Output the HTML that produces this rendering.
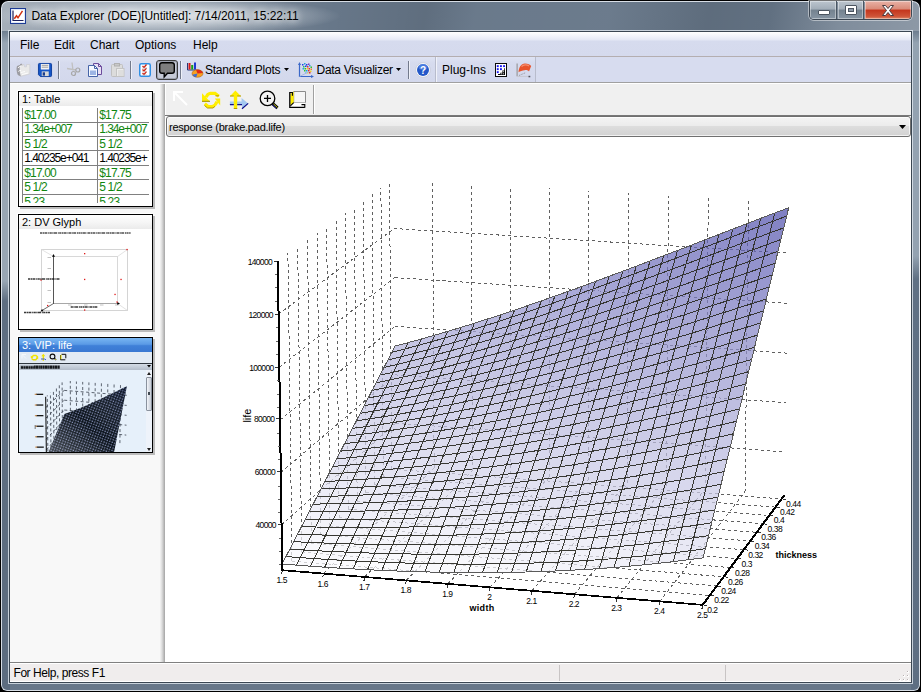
<!DOCTYPE html><html><head><meta charset="utf-8"><title>Data Explorer</title><style>
*{box-sizing:border-box;margin:0;padding:0}
html,body{width:921px;height:692px;overflow:hidden;background:#000}
body{position:relative;font-family:"Liberation Sans",sans-serif;font-size:12px;color:#000}
.abs{position:absolute}
#frame{position:absolute;left:0;top:0;width:921px;height:692px;border-radius:8px 8px 7px 7px;background:#000;overflow:hidden}
#glass{position:absolute;left:1px;top:1px;width:919px;height:690px;border-radius:7px 7px 6px 6px;
 background:
  radial-gradient(ellipse 175px 19px at 165px 15px, rgba(240,244,248,.85), rgba(238,242,246,.45) 55%, rgba(235,240,245,0) 100%),
  linear-gradient(100deg, rgba(255,255,255,.42) 0px, rgba(255,255,255,.34) 60px, rgba(255,255,255,.0) 330px, rgba(0,0,0,.08) 420px, rgba(255,255,255,.02) 470px, rgba(255,255,255,.03) 600px, rgba(0,0,0,.09) 700px,rgba(0,0,0,.06) 760px, rgba(255,255,255,.16) 830px, rgba(255,255,255,.26) 919px) 0 0/919px 30px no-repeat,
  linear-gradient(180deg,rgba(152,166,180,0) 0,#98a6b4 14px,#98a6b4 252px,#5e6e81 272px,#5c6c7f 100%) 0 28px/9px 100% no-repeat,
  linear-gradient(180deg,rgba(147,162,177,0) 0,#93a2b1 14px,#93a2b1 227px,#5f7084 250px,#5d6e82 100%) 100% 28px/9px 100% no-repeat,
  #677789;
 box-shadow:inset 0 0 0 1px rgba(235,240,246,.85)}
#client{position:absolute;left:10px;top:32px;width:901px;height:650px;background:#f8f8f8;box-shadow:0 0 0 1px #3a4652,0 0 0 2px rgba(225,232,240,.8)}
#title{position:absolute;left:31.400px;top:8px;height:16px;line-height:16px;font-size:12px;white-space:pre;letter-spacing:-0.05px;color:#000;text-shadow:0 0 6px rgba(255,255,255,.9),0 0 10px rgba(255,255,255,.8)}
#menubar{position:absolute;left:0;top:0;width:901px;height:24px;background:linear-gradient(180deg,#ffffff 0,#f2f4fb 4px,#e4e8f5 8px,#d6dbee 9px,#d5daed 100%)}
#menubar span{position:absolute;top:6px;line-height:14px;white-space:pre}
#mline{position:absolute;left:0;top:24px;width:901px;height:1px;background:#b4aeb0}
#toolbar{position:absolute;left:0;top:25px;width:901px;height:25px;background:linear-gradient(180deg,#dfe3f3 0,#d6dbee 6px,#d3d8ec 100%)}
#tline{position:absolute;left:0;top:50px;width:901px;height:1px;background:#a0a0a0}
#tline2{position:absolute;left:0;top:51px;width:901px;height:1px;background:#fff}
.sep{position:absolute;top:4px;width:2px;height:18px;border-left:1px solid #737a8c;border-right:1px solid #eef0f8}
.tt{position:absolute;top:6px;line-height:14px;white-space:pre}
#left{position:absolute;left:0;top:52px;width:150px;height:578px;background:#f8f8f8}
#split{position:absolute;left:150px;top:52px;width:5px;height:578px;background:linear-gradient(90deg,#f4f4f4,#dcdcdc 40%,#a4a4a4)}
#right{position:absolute;left:155px;top:52px;width:746px;height:578px;background:#fff}
#rtool{position:absolute;left:0;top:0;width:746px;height:31px;background:#f0f0f0;box-shadow:inset 1px 0 0 #fff}
#rline{position:absolute;left:0;top:31px;width:746px;height:1px;background:#787878}
#combo{position:absolute;left:1px;top:32px;width:745px;height:21px;border:1px solid #707070;border-radius:3px;background:linear-gradient(180deg,#f4f4f4 0,#ececec 45%,#dddddd 50%,#d2d2d2 100%);box-shadow:inset 0 0 0 1px rgba(255,255,255,.7)}
#combo span{position:absolute;left:2px;top:3.500px;font-size:11px;line-height:13px;letter-spacing:-0.23px;white-space:pre}
#status{position:absolute;left:0;top:630px;width:901px;height:20px;background:#f0eded;border-top:1px solid #808080;box-shadow:inset 0 1px 0 #fff, inset 0 -1px 0 #fff}
#status span{position:absolute;left:3.500px;top:3px;line-height:14px;white-space:pre;letter-spacing:-0.44px}
.sdiv{position:absolute;top:2px;width:1px;height:16px;background:#c8c4c4}
.thumb{position:absolute;left:8px;width:135px;height:116px;border:1px solid #000;background:#fff;box-shadow:2px 2px 0 #bcbcbc, -1px -1px 0 #fff;overflow:hidden}
.thead{position:absolute;left:0;top:0;width:133px;height:14px;background:linear-gradient(180deg,#ffffff,#f6f6f6 50%,#ebebeb);font-size:11px;line-height:14.500px;padding-left:3px;white-space:pre}
.cell{position:absolute;font-size:12px;line-height:14px;letter-spacing:-0.85px;white-space:pre;color:#0f860f}
.hl{position:absolute;left:3px;width:127px;height:1px;background:#808080}
.vl{position:absolute;width:1px;background:#808080}
svg{position:absolute;overflow:visible}
svg text{font-family:"Liberation Sans",sans-serif}
.g{stroke:#606060;stroke-width:1;stroke-dasharray:3 3;fill:none}
.grid,.mesh,.surf{shape-rendering:crispEdges}
.surf path{stroke:none;fill-opacity:.72}
.mesh{stroke:#2e2e28;stroke-width:1;fill:none;stroke-opacity:.95}
.edge{stroke:#5a5a5a;stroke-width:1;fill:none;shape-rendering:crispEdges}
.ax{stroke:#000;fill:none;stroke-linejoin:miter;shape-rendering:crispEdges}
.tk{stroke:#333;stroke-width:1;shape-rendering:crispEdges}
.tk2{stroke:#666;stroke-width:1;shape-rendering:crispEdges}
.zl{font-size:8.500px;text-anchor:end;letter-spacing:-0.68px;fill:#000}
.xl{font-size:8.500px;text-anchor:middle;letter-spacing:-0.45px;fill:#000}
.yl{font-size:8.500px;text-anchor:start;letter-spacing:-0.5px;fill:#000}
.al{font-size:9px;font-weight:700;fill:#000}
</style></head><body>
<div id="frame"><div id="glass"></div>
<svg style="left:10px;top:8px" width="16" height="16" viewBox="0 0 16 16"><rect x=".5" y=".5" width="15" height="15" fill="#fff" stroke="#1c3a94"/><rect x="1.5" y="1.500" width="13" height="13" fill="none" stroke="#dfe8f8"/><path d="M3 2.500v10h10.500" fill="none" stroke="#1a1e5a" stroke-width="1.200"/><path d="M4.300 10.800l2.200-3 1.500 2 4.500-7" fill="none" stroke="#d03010" stroke-width="1.500"/></svg>
<div id="title">Data Explorer (DOE)[Untitled]: 7/14/2011, 15:22:11</div>

<div class="abs" style="left:809px;top:1px;width:103px;height:19px;border:1px solid #3d4753;border-top:none;border-radius:0 0 5px 5px;overflow:hidden;box-shadow:0 0 0 1px rgba(255,255,255,.45)">
 <div class="abs" style="left:0;top:0;width:27px;height:18px;background:linear-gradient(180deg,#bcc5ce 0,#a2adb8 45%,#74828f 50%,#8795a3 100%);border-right:1px solid #4a5662;box-shadow:inset 0 0 0 1px rgba(255,255,255,.4)"></div>
 <div class="abs" style="left:28px;top:0;width:26px;height:18px;background:linear-gradient(180deg,#bcc5ce 0,#a2adb8 45%,#74828f 50%,#8795a3 100%);border-right:1px solid #4a5662;box-shadow:inset 0 0 0 1px rgba(255,255,255,.4)"></div>
 <div class="abs" style="left:55px;top:0;width:46px;height:18px;background:linear-gradient(180deg,#e8b2a6 0,#d98a78 45%,#c4351c 50%,#cf5438 85%,#de8a6a 100%);box-shadow:inset 0 0 0 1px rgba(255,255,255,.4)"></div>
 <div class="abs" style="left:8px;top:9px;width:12px;height:5px;background:#fff;border:1px solid #4c5560;border-radius:1px"></div>
 <div class="abs" style="left:35px;top:4px;width:12px;height:10px;background:#fff;border:1px solid #4c5560;border-radius:1px"></div>
 <div class="abs" style="left:38px;top:7px;width:6px;height:4px;background:#8e9aa8;border:1px solid #4c5560"></div>
 <svg style="left:70px;top:3px" width="16" height="13" viewBox="0 0 16 13"><path d="M2.5 1.5h3l2.5 3 2.500-3h3l-4 5 4 5h-3l-2.500-3-2.500 3h-3l4-5z" fill="#fff" stroke="#4a3a3e" stroke-width="1"/></svg>
</div>
<div id="client">
<div id="menubar"><span style="left:10px">File</span><span style="left:44px">Edit</span><span style="left:80px">Chart</span><span style="left:125px">Options</span><span style="left:183px">Help</span></div><div id="mline"></div>
<div id="toolbar">
<div class="sep" style="left:48px"></div><div class="sep" style="left:120px"></div><div class="sep" style="left:170px"></div><div class="sep" style="left:398px"></div>
<div class="abs" style="left:425px;top:0;width:1px;height:25px;background:#b8bccc"></div><div class="abs" style="left:426px;top:0;width:1px;height:25px;background:#f0f2fa"></div>
<div class="abs" style="left:525px;top:0;width:1px;height:25px;background:#b8bccc"></div><div class="abs" style="left:526px;top:0;width:375px;height:25px;background:#d7dcef"></div>
<svg style="left:6px;top:6px" width="15" height="14" viewBox="0 0 15 14"><path d="M2.500 4.500L5 1.500H8L8.500 3.800H10.500V1.500H13.800V11L5 13.300L2.500 11.500Z" fill="#e9e9e9" stroke="#cfcfd4" stroke-width=".8"/><path d="M1 3Q-.3 7 1.800 12L4.800 13.500L3.800 9Q3 5.500 4.500 1.800Z" fill="#9c9ca2"/><path d="M2 5Q3 3.200 4.500 3.500M2.300 8.500Q3.500 7 5 7.500M5 9.500L9 8.500M6 11.500L12 10" fill="none" stroke="#fff" stroke-width=".9"/><path d="M4 2L5.200 0.800L6 2.500" fill="none" stroke="#9c9ca0" stroke-width=".9"/></svg><svg style="left:28px;top:6px" width="14" height="14" viewBox="0 0 15 15"><path d="M.5 1.500q0-1 1-1h12q1 0 1 1v12q0 1-1 1h-11l-2-2z" fill="#1656c8" stroke="#0c3c9c"/><rect x="3" y="1" width="9" height="6" fill="#f4f4f4"/><path d="M4 2.500h7M4 4.500h7" stroke="#9a9a9a"/><rect x="4" y="9" width="7.500" height="5" fill="#d8d8d8"/><rect x="5" y="10" width="2.500" height="3.500" fill="#1a3c8c"/></svg><svg style="left:56px;top:5px" width="15" height="15" viewBox="0 0 15 15"><path d="M6 .5l1 8M1 6.500l9 1.500" stroke="#c0c0c0" stroke-width="1.300" fill="none"/><circle cx="7.500" cy="11.500" r="2" fill="none" stroke="#a8a8a8" stroke-width="1.200"/><circle cx="11.800" cy="8" r="2" fill="none" stroke="#a8a8a8" stroke-width="1.200"/></svg><svg style="left:78px;top:6px" width="15" height="14" viewBox="0 0 15 14"><path d="M5.500.5h5l3 3v8h-8z" fill="#e8e0f4" stroke="#6c4c9c"/><path d="M10.500.5v3h3" fill="none" stroke="#6c4c9c"/><path d="M.5 2.500h6l3 3v8h-9z" fill="#f4f8ff" stroke="#4664a8"/><path d="M6.500 2.500v3h3" fill="none" stroke="#4664a8"/><rect x="2" y="7.500" width="6" height="4.500" fill="#9cb4e4"/></svg><svg style="left:101px;top:6px" width="14" height="14" viewBox="0 0 14 14"><rect x=".5" y="1.500" width="11" height="12" rx="1" fill="#dcdcdc" stroke="#c0c0c0"/><rect x="3.500" y=".5" width="5" height="2.500" fill="#c8c8c8" stroke="#b0b0b0"/><rect x="5.500" y="5.500" width="7.500" height="8" fill="#ececec" stroke="#c4c4c4"/><path d="M7 8h5M7 10h5M7 12h5" stroke="#d0d0d0"/></svg><svg style="left:129px;top:6px" width="12" height="14" viewBox="0 0 12 14"><rect x=".75" y=".75" width="10.500" height="12.500" rx="1.500" fill="#fff" stroke="#2f8fe4" stroke-width="1.500"/><path d="M3.500 3l1.500 1.500 2.500-3M3.500 6.500l1.500 1.500 2.500-3M3.500 10l1.500 1.500 2.500-3" fill="none" stroke="#d02818" stroke-width="1.300"/><path d="M3 5.200h5M3 8.700h5M3 12h5" stroke="#b8b8c8" stroke-width=".6"/></svg><div class="abs" style="left:146px;top:3px;width:22px;height:20px;border:1px solid #3c3c3c;border-radius:3px;background:#c6cad6;box-shadow:inset 0 0 0 1px #9ea2ae"></div><svg style="left:149px;top:5px" width="16" height="16" viewBox="0 0 16 16"><path d="M3 .7h10q2.300 0 2.300 2.300v6q0 2.300-2.300 2.300h-4.500l-3.300 3.700v-3.700h-2.200q-2.300 0-2.300-2.300v-6q0-2.300 2.300-2.300z" fill="#7e7e7e" stroke="#000" stroke-width="1.400"/></svg><svg style="left:177px;top:5px" width="17" height="16" viewBox="0 0 17 16"><path d="M.5 1v7h9" fill="none" stroke="#283878"/><rect x="1.500" y="1" width="2" height="6.500" fill="#d81818"/><rect x="4.200" y="3" width="2" height="4.500" fill="#18a018"/><rect x="7" y=".5" width="2" height="7" fill="#2038d0"/><ellipse cx="10.500" cy="11.500" rx="5.500" ry="3.800" fill="#f8a020"/><path d="M10.500 11.500l5.500-.5a5.500 3.800 0 0 0-7-3.300z" fill="#e02818"/><path d="M10.500 11.500l-5.300 1.200a5.500 3.800 0 0 0 4 2.600z" fill="#3870d8"/><ellipse cx="10.500" cy="11.500" rx="5.500" ry="3.800" fill="none" stroke="#a05810" stroke-width=".5"/></svg><svg style="left:274px;top:11px" width="5" height="3" viewBox="0 0 5 3"><path d="M0 0h5l-2.500 3z" fill="#000"/></svg><svg style="left:385.500px;top:11px" width="5" height="3" viewBox="0 0 5 3"><path d="M0 0h5l-2.500 3z" fill="#000"/></svg><svg style="left:288px;top:5px" width="16" height="16" viewBox="0 0 16 16"><rect x="4" y="2" width="1.500" height="1.500" fill="#2040e0"/><rect x="6" y="1" width="1.500" height="1.500" fill="#20a0e0"/><rect x="8" y="2" width="1.500" height="1.500" fill="#2040e0"/><rect x="10" y="1.5" width="1.500" height="1.500" fill="#8030c0"/><rect x="5" y="4" width="1.500" height="1.500" fill="#20c060"/><rect x="7" y="3.5" width="1.500" height="1.500" fill="#2040e0"/><rect x="9" y="4" width="1.500" height="1.500" fill="#e03030"/><rect x="11" y="3" width="1.500" height="1.500" fill="#20a0e0"/><rect x="12.5" y="4.5" width="1.500" height="1.500" fill="#30c030"/><rect x="4.5" y="6" width="1.500" height="1.500" fill="#20a0e0"/><rect x="6.5" y="6" width="1.500" height="1.500" fill="#30c030"/><rect x="8.5" y="6" width="1.500" height="1.500" fill="#f0d020"/><rect x="10.5" y="6" width="1.500" height="1.500" fill="#e03030"/><rect x="12.5" y="6.5" width="1.500" height="1.500" fill="#f08020"/><rect x="6" y="8" width="1.500" height="1.500" fill="#30c030"/><rect x="8" y="8" width="1.500" height="1.500" fill="#20a0e0"/><rect x="10" y="8" width="1.500" height="1.500" fill="#e03030"/><rect x="12" y="8.5" width="1.500" height="1.500" fill="#f0d020"/><rect x="9" y="10" width="1.500" height="1.500" fill="#f0d020"/><rect x="11" y="10" width="1.500" height="1.500" fill="#e03030"/><rect x="7" y="10" width="1.500" height="1.500" fill="#80c0f0"/><path d="M1.500 2v12.500h13" fill="none" stroke="#3a68c8" stroke-width="1.200"/><path d="M1.500 0l-1.500 3h3zM16 14.500l-3-1.500v3z" fill="#3a68c8"/><path d="M1.500 14.500l10-5" stroke="#9ab0e0" stroke-width=".8"/></svg><svg style="left:405px;top:5px" width="16" height="16" viewBox="0 0 16 16"><circle cx="8" cy="8" r="7.300" fill="#fff" stroke="#c4c8d4" stroke-width=".8"/><circle cx="8" cy="8" r="6" fill="#2458c8"/><ellipse cx="8" cy="5" rx="4.500" ry="3" fill="#5a8ae8" opacity=".7"/><text x="8" y="11.500" font-size="10" font-weight="700" fill="#fff" text-anchor="middle">?</text></svg><svg style="left:485px;top:6px" width="12" height="14" viewBox="0 0 12 14"><rect x=".5" y=".5" width="11" height="13" fill="#fff" stroke="#0a0a0a" stroke-width="1"/><rect x="1.8" y="2.2" width="1.900" height="1.900" fill="#1818f0"/><rect x="5" y="2.2" width="1.900" height="1.900" fill="#1818f0"/><rect x="8.1" y="2.2" width="1.900" height="1.900" fill="#1818f0"/><rect x="1.8" y="5.2" width="1.900" height="1.900" fill="#1818f0"/><rect x="5" y="5.2" width="1.900" height="1.900" fill="#1818f0"/><rect x="1.8" y="8.2" width="1.900" height="1.900" fill="#1818f0"/><path d="M8.100 2.200h1.900l-1.900 1.600zM5 5.200h1.900l-1.900 1.600z" fill="#fff" opacity=".0"/><path d="M3 12h7V5.300H9.200V7.600H7.300V9.700H5.200V11H3z" fill="#0a0a0a"/><rect x="7.800" y="8.200" width="1" height="1" fill="#fff"/><rect x="5.800" y="10.300" width="1" height="1" fill="#fff"/><rect x="7.800" y="10.300" width="1" height="1" fill="#fff"/></svg><svg style="left:506px;top:5px" width="17" height="16" viewBox="0 0 17 16"><path d="M1.100 1.500V14.300" stroke="#8c8c8c" stroke-width="1"/><path d="M1.100 14.400H13" stroke="#c8c8d0" stroke-width="1"/><path d="M3 13.500l7-3" stroke="#9c9ca4" stroke-width="1" stroke-dasharray="1.500 1"/><path d="M2.500 10.200C3 5 5 1.800 9 1.500c3 0 5 1 6.200 2.500l-2.200 5.500c-1-1.300-2.500-1.800-4.500-1.300S4 9 2.500 10.200z" fill="#e8542c"/><path d="M5.500 4.500C7.500 2.500 11 2.500 13 4" stroke="#f49070" stroke-width="1.300" fill="none"/><rect x="12.500" y="13.800" width="1.800" height="1.500" fill="#50505c"/></svg>
<span class="tt" style="left:195px;letter-spacing:-0.25px">Standard Plots</span><span class="tt" style="left:306.500px;letter-spacing:-0.28px">Data Visualizer</span><span class="tt" style="left:432px">Plug-Ins</span>
</div><div id="tline"></div><div id="tline2"></div>
<div id="left"><div class="thumb" style="top:7px"><div class="thead">1: Table</div><div class="vl" style="left:3px;top:16px;height:98px"></div><div class="vl" style="left:78px;top:16px;height:98px"></div><div class="cell" style="left:5.300px;top:16.0px">$17.00</div><div class="cell" style="left:80.300px;top:16.0px">$17.75</div><div class="hl" style="top:30px"></div><div class="cell" style="left:5.300px;top:30.4px;letter-spacing:-1.08px">1.34e+007</div><div class="cell" style="left:80.300px;top:30.4px;letter-spacing:-1.08px">1.34e+007</div><div class="hl" style="top:44px"></div><div class="cell" style="left:5.300px;top:44.9px">5 1/2</div><div class="cell" style="left:80.300px;top:44.9px">5 1/2</div><div class="hl" style="top:58px"></div><div class="cell" style="left:5.300px;top:59.3px;color:#000;letter-spacing:-1.08px">1.40235e+041</div><div class="cell" style="left:80.300px;top:59.3px;color:#000;letter-spacing:-1.08px">1.40235e+</div><div class="hl" style="top:73px"></div><div class="cell" style="left:5.300px;top:73.8px">$17.00</div><div class="cell" style="left:80.300px;top:73.8px">$17.75</div><div class="hl" style="top:87px"></div><div class="cell" style="left:5.300px;top:88.2px">5 1/2</div><div class="cell" style="left:80.300px;top:88.2px">5 1/2</div><div class="hl" style="top:102px"></div><div class="cell" style="left:5.300px;top:102.7px">5.23</div><div class="cell" style="left:80.300px;top:102.7px">5.23</div><div class="abs" style="left:130px;top:14px;width:3px;height:100px;background:#fff"></div><div class="abs" style="left:0;top:111px;width:133px;height:3px;background:#fff"></div></div><div class="thumb" style="top:130px"><div class="thead">2: DV Glyph</div><svg style="left:0;top:0" width="133" height="114"><path d="M22.500 34.500H108.500V95.500H22.500Z" fill="none" stroke="#d4d4d4" stroke-width="1" shape-rendering="crispEdges"/><path d="M34.500 41.500H98.500V88.500" fill="none" stroke="#d8d8d8" stroke-width="1" shape-rendering="crispEdges"/><path d="M22.500 34.500L34.500 41.500M108.500 34.500L98.500 41.500M108.500 95.500L98.500 88.500" stroke="#dcdcdc" stroke-width=".8"/><path d="M34.500 41V88.500" fill="none" stroke="#555" stroke-width="1" shape-rendering="crispEdges"/><path d="M34.500 88.500H99" fill="none" stroke="#a8a8a8" stroke-width="1" shape-rendering="crispEdges"/><path d="M34.500 88.500L23 95.500" stroke="#444" stroke-width=".8"/><path d="M34.500 39l-1.500 2.800h3zM101 88.500l-2.800-1.500v3zM21.500 96.500l3-.2-1.500-2.200z" fill="#000"/><rect x="65.0" y="38.0" width="1.300" height="1.300" fill="#e01818"/><rect x="107.4" y="33.9" width="1.300" height="1.300" fill="#e01818"/><rect x="65.0" y="63.8" width="1.300" height="1.300" fill="#e01818"/><rect x="101.4" y="63.8" width="1.300" height="1.300" fill="#e01818"/><rect x="95.4" y="78.8" width="1.300" height="1.300" fill="#e01818"/><rect x="65.0" y="94.4" width="1.300" height="1.300" fill="#e01818"/><rect x="28.0" y="89.9" width="1.300" height="1.300" fill="#e01818"/><rect x="21.4" y="64.4" width="1.300" height="1.300" fill="#e01818"/><rect x="97.4" y="86.4" width="1.300" height="1.300" fill="#e01818"/><path d="M21.0 18.0H112.0" stroke="#080808" stroke-width="1.400" stroke-dasharray="2.200 .5 1.300 .4 3 .8 1 .4" opacity="0.713"/><path d="M9.0 64.0H41.0" stroke="#080808" stroke-width="1.400" stroke-dasharray="2.200 .5 1.300 .4 3 .8 1 .4" opacity="0.8049999999999999"/><path d="M51.7 92.0H79.0" stroke="#080808" stroke-width="1.400" stroke-dasharray="2.200 .5 1.300 .4 3 .8 1 .4" opacity="0.8049999999999999"/><path d="M5.0 97.5H31.0" stroke="#080808" stroke-width="1.400" stroke-dasharray="2.200 .5 1.300 .4 3 .8 1 .4" opacity="0.8049999999999999"/><rect x="28.5" y="42.0" width="3.500" height="1" fill="#777" opacity=".45"/><rect x="28.5" y="53.0" width="3.500" height="1" fill="#777" opacity=".45"/><rect x="28.5" y="75.0" width="3.500" height="1" fill="#777" opacity=".45"/><rect x="28.5" y="87.0" width="3.500" height="1" fill="#777" opacity=".45"/><rect x="49.0" y="89.5" width="3.500" height="1" fill="#777" opacity=".45"/><rect x="65.0" y="89.5" width="3.500" height="1" fill="#777" opacity=".45"/><rect x="81.0" y="89.5" width="3.500" height="1" fill="#777" opacity=".45"/><rect x="96.0" y="89.5" width="3.500" height="1" fill="#777" opacity=".45"/></svg></div><div class="thumb" style="top:253px;background:#e6f0fa"><div class="thead" style="background:linear-gradient(180deg,#78b6f2 0,#5a9ae6 45%,#3f80d8 55%,#3a78d2 100%);color:#fff">3: VIP: life</div><div class="abs" style="left:0;top:14px;width:133px;height:11px;background:#e3ebf4"></div><div class="abs" style="left:0;top:25px;width:133px;height:1px;background:#303840"></div><div class="abs" style="left:0;top:26px;width:133px;height:6px;background:linear-gradient(180deg,#d4dce6,#b4becb)"></div><svg style="left:0;top:26px" width="60" height="6"><path d="M1.800 3.100H41" stroke="#06080c" stroke-width="3.200" stroke-dasharray="2.300 .35 1.800 .3 2.800 .35 1.500 .3" opacity=".92"/><path d="M1.800 1.700H15" stroke="#b8c2ce" stroke-width="1"/></svg><svg style="left:128px;top:27px" width="4" height="3"><path d="M0 0h4l-2 2.500z" fill="#000"/></svg><svg style="left:0;top:14px" width="60" height="11" viewBox="0 14 60 11"><path d="M3 20.500V16.500h4M3.300 16.800l3.700 3.700" stroke="#f4f8fc" stroke-width="1" fill="none"/><path d="M18.800 19l-1.800-1.500h-2.500l-1.800 1.800" fill="none" stroke="#f0e400" stroke-width="1.400"/><path d="M11.800 17.500v2.600h2.800z" fill="#f0e400"/><path d="M12.500 20.500l1.800 1.300h2.500l1.700-2" fill="none" stroke="#e8d800" stroke-width="1.400"/><path d="M16.800 18.800h2.400v2.600z" fill="#f0e400"/><path d="M24.300 15.800l2 2.500h-1.300v4.500h-1.400v-4.500h-1.300z" fill="#f0e400"/><path d="M22 21h3.500l1.500.8" stroke="#3050c8" stroke-width=".9" fill="none"/><circle cx="33.500" cy="18.500" r="2.400" fill="none" stroke="#0c0c0c" stroke-width="1.100"/><path d="M35.300 20.300l1.800 1.700" stroke="#0c0c0c" stroke-width="1.200"/><rect x="36.200" y="21" width="1" height="1" fill="#e8e020"/><path d="M42.500 16.300h4.300v4M41.500 17v4.800h4.800" fill="none" stroke="#0c0c0c" stroke-width="1"/><path d="M41.500 17.500l1-1.200v4.200l-1 1.300z" fill="#f0e400"/></svg><div class="abs" style="left:127px;top:32px;width:6px;height:82px;background:#eef3fa"></div><div class="abs" style="left:127px;top:39px;width:6px;height:34px;border:1px solid #8a929e;border-radius:1px;background:linear-gradient(90deg,#f4f6fa,#c4cad4)"></div><div class="abs" style="left:129px;top:54px;width:2px;height:3px;background:#404850"></div><svg style="left:128px;top:34px" width="4" height="3"><path d="M0 3h4l-2-3z" fill="#202020"/></svg><svg style="left:128px;top:110px" width="4" height="3"><path d="M0 0h4l-2 3z" fill="#202020"/></svg><svg style="left:0;top:32px" width="127" height="82" viewBox="0 32 127 82"><defs><pattern id="dots" width="2.600" height="2.600" patternUnits="userSpaceOnUse" patternTransform="rotate(20)"><rect width="2.600" height="2.600" fill="#081018"/><rect x=".5" y=".5" width="1.100" height="1.100" fill="#b4c0f4"/></pattern><linearGradient id="fade" x1="0" y1="1" x2="1" y2="0"><stop offset="0" stop-color="#fff" stop-opacity=".28"/><stop offset=".5" stop-color="#fff" stop-opacity="0"/><stop offset="1" stop-color="#203070" stop-opacity=".2"/></linearGradient></defs><path d="M45.4 91.3L107.3 97.1M27.3 111.6L45.4 91.3M45.4 81.7L107.5 87.2M27.1 101.2L45.4 81.7M45.3 72.0L107.6 77.3M27.0 90.7L45.3 72.0M45.2 62.2L107.7 67.4M26.9 80.1L45.2 62.2M45.2 52.4L107.8 57.3M26.8 69.5L45.2 52.4M51.5 100.3L51.3 43.0M57.6 100.9L57.4 43.5M63.7 101.5L63.7 43.9M69.8 102.1L69.9 44.4M76.0 102.7L76.2 44.9M82.2 103.3L82.4 45.3M88.4 103.9L88.8 45.8M94.7 104.5L95.1 46.3M100.9 105.1L101.5 46.8M28.9 118.9L28.3 57.4M32.0 115.4L31.4 54.7M35.0 111.9L34.4 52.0M37.9 108.5L37.4 49.4M40.7 105.3L40.3 46.8M43.4 102.1L43.1 44.4" stroke="#38404c" stroke-width=".8" stroke-dasharray="3 2.500" fill="none"/><path d="M27.4 119.5L94.3 118.3L107.9 48.2L101.5 51.3L95.1 54.4L88.7 57.5L82.4 60.5L76.1 63.5L69.9 66.3L63.7 69.0L57.5 71.5L51.4 73.8L45.3 75.9Z" fill="url(#dots)"/><path d="M27.4 119.5L94.3 118.3L107.9 48.2L101.5 51.3L95.1 54.4L88.7 57.5L82.4 60.5L76.1 63.5L69.9 66.3L63.7 69.0L57.5 71.5L51.4 73.8L45.3 75.9Z" fill="url(#fade)"/><path d="M26.7 58.8L27.4 120.7" stroke="#000" stroke-width="1"/><rect x="17.8" y="108.5" width="7" height="1.300" fill="#181818"/><rect x="16.3" y="108.5" width="2" height="1.300" fill="#c07020" opacity=".7"/><rect x="17.6" y="98.1" width="7" height="1.300" fill="#181818"/><rect x="16.1" y="98.1" width="2" height="1.300" fill="#c07020" opacity=".7"/><rect x="17.5" y="87.6" width="7" height="1.300" fill="#181818"/><rect x="16.0" y="87.6" width="2" height="1.300" fill="#c07020" opacity=".7"/><rect x="17.4" y="77.0" width="7" height="1.300" fill="#181818"/><rect x="15.9" y="77.0" width="2" height="1.300" fill="#c07020" opacity=".7"/><rect x="17.3" y="66.4" width="7" height="1.300" fill="#181818"/><rect x="15.8" y="66.4" width="2" height="1.300" fill="#c07020" opacity=".7"/><rect x="17.2" y="55.7" width="7" height="1.300" fill="#181818"/><rect x="15.7" y="55.7" width="2" height="1.300" fill="#c07020" opacity=".7"/><rect x="15.500" y="87" width="1.500" height="4" fill="#666" opacity=".6"/></svg></div></div><div id="split"></div>
<div id="right"><div id="rtool"><svg style="left:0;top:0" width="160" height="31" viewBox="165 84 160 31"><path d="M174 101V92h9M174.500 92.500l12.500 12.500" fill="none" stroke="#fff" stroke-width="2"/><g transform="translate(196 86)"><path d="M22.800 10.300L19 7.300H14.500Q11 8 10.200 11.500" fill="none" stroke="#ffee00" stroke-width="3.200"/><path d="M6 7.200V15.600H14z" fill="#ffee00"/><path d="M6 15.300H14" stroke="#a08c00" stroke-width="1"/><path d="M8.800 17.800L12 20.500H16.500Q19.500 19.500 21 15.500" fill="none" stroke="#ffee00" stroke-width="3.200"/><path d="M18.800 12.600H24.200V19.600z" fill="#ffee00"/><path d="M8.500 19.500L11.500 22H17L19 20.300" fill="none" stroke="#b89c00" stroke-width="1"/><path d="M19.500 9.800H23" stroke="#b89c00" stroke-width="1"/></g><g transform="translate(196 86)"><path d="M33.900 15.400H45.600V12L52.200 17.400L46 22.800V18.600H33.900z" fill="#a4c8f0"/><path d="M33.900 18.700H46M52.200 17.400L46 22.800" stroke="#10108c" stroke-width="1.200" fill="none"/><path d="M39.400 4.600L45 10.200H41.200V22.800H37.800V10.200H33.900z" fill="#ffee00"/><path d="M34 10H37.800M41.200 10H45M37.800 22.500H41.200" stroke="#b09800" stroke-width="1"/></g><g transform="translate(252 86)"><circle cx="15.500" cy="12.400" r="7.300" fill="#f3f3f3" stroke="#000" stroke-width="1.300"/><path d="M12 12.400h7M15.500 9v7" stroke="#000" stroke-width="1.300"/><path d="M20.500 17.500l5 4.500" stroke="#000" stroke-width="3.200"/><path d="M21.500 18l4 3.600" stroke="#c8c820" stroke-width="1"/><path d="M20.300 18.800l4 3.600" stroke="#2020a0" stroke-width="1"/></g><g transform="translate(252 86)"><path d="M41.700 5.500H53.500V16.700H41.700z" fill="#f6f6f6" stroke="#8c8c8c" stroke-width="1"/><path d="M38.400 19.800L41.700 16.700H53.500L52 21H38.400z" fill="#fff"/><path d="M38.400 8L41.700 5.500V16.500L38.400 19.800z" fill="#ffee00"/><path d="M37.800 6.500V21.300H52.800" fill="none" stroke="#000" stroke-width="1.300"/><path d="M37.300 6.500H40.400V9.800M49.500 18.600H52.800V21.800M38.400 19.800l3.300-3.100" fill="none" stroke="#000" stroke-width="1.100"/></g></svg><div class="abs" style="left:148px;top:1px;width:1px;height:29px;background:#a0a0a0"></div><div class="abs" style="left:149px;top:1px;width:1px;height:29px;background:#fff"></div></div><div id="rline"></div>
<div id="combo"><span>response (brake.pad.life)</span><svg style="left:732px;top:8px" width="7" height="4"><path d="M0 0h7l-3.500 4z" fill="#000"/></svg></div>
<svg style="left:-165px;top:-84px" width="921" height="692" viewBox="0 0 921 692">
<g class="grid"><line class="g" x1="292" y1="561" x2="287.9" y2="253.5"/><line class="g" x1="301.7" y1="552.1" x2="297.7" y2="246.6"/><line class="g" x1="311.3" y1="543.3" x2="307.5" y2="239.8"/><line class="g" x1="320.7" y1="534.6" x2="317.1" y2="233"/><line class="g" x1="330" y1="526" x2="326.6" y2="226.4"/><line class="g" x1="339.2" y1="517.6" x2="336" y2="219.8"/><line class="g" x1="348.2" y1="509.2" x2="345.2" y2="213.3"/><line class="g" x1="357.2" y1="501" x2="354.3" y2="206.9"/><line class="g" x1="366" y1="492.8" x2="363.3" y2="200.6"/><line class="g" x1="374.7" y1="484.8" x2="372.1" y2="194.4"/><line class="g" x1="383.3" y1="476.9" x2="380.9" y2="188.3"/><line class="g" x1="391.8" y1="469.1" x2="389.5" y2="182.2"/><line class="g" x1="281.6" y1="524.6" x2="395.7" y2="423.2"/><line class="g" x1="280.8" y1="472.5" x2="395.3" y2="374.9"/><line class="g" x1="280.1" y1="420" x2="394.9" y2="326.4"/><line class="g" x1="279.3" y1="367.1" x2="394.6" y2="277.6"/><line class="g" x1="278.6" y1="314" x2="394.2" y2="228.5"/><line class="g" x1="434.1" y1="468.1" x2="432.5" y2="181.5"/><line class="g" x1="472.3" y1="471" x2="471.4" y2="183.8"/><line class="g" x1="510.8" y1="474" x2="510.4" y2="186.2"/><line class="g" x1="549.4" y1="476.9" x2="549.6" y2="188.5"/><line class="g" x1="588.1" y1="479.9" x2="589" y2="190.8"/><line class="g" x1="627.1" y1="482.8" x2="628.6" y2="193.2"/><line class="g" x1="666.2" y1="485.8" x2="668.4" y2="195.6"/><line class="g" x1="705.5" y1="488.8" x2="708.3" y2="198"/><line class="g" x1="745" y1="491.8" x2="748.5" y2="200.3"/><line class="g" x1="395.7" y1="423.2" x2="785.2" y2="451.9"/><line class="g" x1="395.3" y1="374.9" x2="785.9" y2="402.7"/><line class="g" x1="394.9" y1="326.4" x2="786.6" y2="353.1"/><line class="g" x1="394.6" y1="277.6" x2="787.3" y2="303.3"/><line class="g" x1="394.2" y1="228.5" x2="788.1" y2="253.1"/><line class="g" x1="292" y1="561" x2="709.8" y2="595.4"/><line class="g" x1="301.7" y1="552.1" x2="716.8" y2="586"/><line class="g" x1="311.3" y1="543.3" x2="723.6" y2="576.8"/><line class="g" x1="320.7" y1="534.6" x2="730.4" y2="567.6"/><line class="g" x1="330" y1="526" x2="737.1" y2="558.6"/><line class="g" x1="339.2" y1="517.6" x2="743.8" y2="549.7"/><line class="g" x1="348.2" y1="509.2" x2="750.3" y2="541"/><line class="g" x1="357.2" y1="501" x2="756.7" y2="532.3"/><line class="g" x1="366" y1="492.8" x2="763.1" y2="523.8"/><line class="g" x1="374.7" y1="484.8" x2="769.3" y2="515.4"/><line class="g" x1="383.3" y1="476.9" x2="775.5" y2="507.1"/><line class="g" x1="391.8" y1="469.1" x2="781.6" y2="498.9"/><line class="g" x1="323.3" y1="573.5" x2="434.1" y2="468.1"/><line class="g" x1="364.7" y1="576.9" x2="472.3" y2="471"/><line class="g" x1="406.2" y1="580.4" x2="510.8" y2="474"/><line class="g" x1="447.9" y1="583.8" x2="549.4" y2="476.9"/><line class="g" x1="489.9" y1="587.3" x2="588.1" y2="479.9"/><line class="g" x1="532" y1="590.8" x2="627.1" y2="482.8"/><line class="g" x1="574.4" y1="594.3" x2="666.2" y2="485.8"/><line class="g" x1="616.9" y1="597.8" x2="705.5" y2="488.8"/><line class="g" x1="659.7" y1="601.4" x2="745" y2="491.8"/></g>
<g class="surf"><path fill="#b3b3db" d="M391.9 352.3L405.1 348.9L408.2 342.6L395.1 346.1Z"/><path fill="#b0b0da" d="M405.1 348.9L418.3 345.4L421.4 339L408.2 342.6Z"/><path fill="#adadd9" d="M418.3 345.4L431.6 341.7L434.7 335.2L421.4 339Z"/><path fill="#aaaad7" d="M431.6 341.7L444.9 337.9L447.9 331.3L434.7 335.2Z"/><path fill="#a7a7d6" d="M444.9 337.9L458.2 334L461.2 327.3L447.9 331.3Z"/><path fill="#a4a4d4" d="M458.2 334L471.5 330L474.5 323.2L461.2 327.3Z"/><path fill="#a1a1d3" d="M471.5 330L484.9 325.8L487.8 318.9L474.5 323.2Z"/><path fill="#9e9ed1" d="M484.9 325.8L498.3 321.5L501.2 314.6L487.8 318.9Z"/><path fill="#9a9ad0" d="M498.3 321.5L511.8 317.2L514.6 310.1L501.2 314.6Z"/><path fill="#9797ce" d="M511.8 317.2L525.2 312.7L528 305.5L514.6 310.1Z"/><path fill="#9494cd" d="M525.2 312.7L538.7 308.1L541.4 300.8L528 305.5Z"/><path fill="#9090cb" d="M538.7 308.1L552.2 303.5L554.9 296.1L541.4 300.8Z"/><path fill="#8d8dc9" d="M552.2 303.5L565.8 298.7L568.4 291.3L554.9 296.1Z"/><path fill="#8989c8" d="M565.8 298.7L579.3 293.9L582 286.4L568.4 291.3Z"/><path fill="#8686c6" d="M579.3 293.9L592.9 289L595.5 281.4L582 286.4Z"/><path fill="#8282c4" d="M592.9 289L606.6 284.1L609.1 276.3L595.5 281.4Z"/><path fill="#7e7ec3" d="M606.6 284.1L620.3 279L622.8 271.2L609.1 276.3Z"/><path fill="#7b7bc1" d="M620.3 279L633.9 274L636.4 266.1L622.8 271.2Z"/><path fill="#7777bf" d="M633.9 274L647.7 268.8L650.1 260.9L636.4 266.1Z"/><path fill="#7373bd" d="M647.7 268.8L661.4 263.7L663.8 255.6L650.1 260.9Z"/><path fill="#6f6fbc" d="M661.4 263.7L675.2 258.5L677.6 250.4L663.8 255.6Z"/><path fill="#6c6cba" d="M675.2 258.5L689 253.2L691.4 245.1L677.6 250.4Z"/><path fill="#6868b8" d="M689 253.2L702.9 247.9L705.2 239.7L691.4 245.1Z"/><path fill="#6464b6" d="M702.9 247.9L716.8 242.7L719 234.4L705.2 239.7Z"/><path fill="#6060b5" d="M716.8 242.7L730.7 237.4L732.9 229L719 234.4Z"/><path fill="#5d5db3" d="M730.7 237.4L744.6 232L746.8 223.7L732.9 229Z"/><path fill="#5959b1" d="M744.6 232L758.6 226.7L760.7 218.3L746.8 223.7Z"/><path fill="#5555af" d="M758.6 226.7L772.6 221.4L774.7 213L760.7 218.3Z"/><path fill="#5151ad" d="M772.6 221.4L786.6 216.1L788.7 207.7L774.7 213Z"/><path fill="#b5b5dc" d="M387.9 359.9L401.2 356.7L405.1 348.9L391.9 352.3Z"/><path fill="#b3b3db" d="M401.2 356.7L414.4 353.3L418.3 345.4L405.1 348.9Z"/><path fill="#b0b0da" d="M414.4 353.3L427.8 349.8L431.6 341.7L418.3 345.4Z"/><path fill="#adadd9" d="M427.8 349.8L441.1 346.2L444.9 337.9L431.6 341.7Z"/><path fill="#aaaad7" d="M441.1 346.2L454.5 342.4L458.2 334L444.9 337.9Z"/><path fill="#a7a7d6" d="M454.5 342.4L467.8 338.5L471.5 330L458.2 334Z"/><path fill="#a4a4d4" d="M467.8 338.5L481.3 334.5L484.9 325.8L471.5 330Z"/><path fill="#a1a1d3" d="M481.3 334.5L494.7 330.4L498.3 321.5L484.9 325.8Z"/><path fill="#9e9ed1" d="M494.7 330.4L508.2 326.2L511.8 317.2L498.3 321.5Z"/><path fill="#9a9ad0" d="M508.2 326.2L521.7 321.9L525.2 312.7L511.8 317.2Z"/><path fill="#9797ce" d="M521.7 321.9L535.2 317.5L538.7 308.1L525.2 312.7Z"/><path fill="#9494cd" d="M535.2 317.5L548.7 313L552.2 303.5L538.7 308.1Z"/><path fill="#9090cb" d="M548.7 313L562.3 308.4L565.8 298.7L552.2 303.5Z"/><path fill="#8d8dc9" d="M562.3 308.4L575.9 303.7L579.3 293.9L565.8 298.7Z"/><path fill="#8989c8" d="M575.9 303.7L589.6 299L592.9 289L579.3 293.9Z"/><path fill="#8686c6" d="M589.6 299L603.3 294.2L606.6 284.1L592.9 289Z"/><path fill="#8282c4" d="M603.3 294.2L617 289.3L620.3 279L606.6 284.1Z"/><path fill="#7f7fc3" d="M617 289.3L630.7 284.3L633.9 274L620.3 279Z"/><path fill="#7b7bc1" d="M630.7 284.3L644.5 279.4L647.7 268.8L633.9 274Z"/><path fill="#7777bf" d="M644.5 279.4L658.3 274.3L661.4 263.7L647.7 268.8Z"/><path fill="#7474be" d="M658.3 274.3L672.1 269.2L675.2 258.5L661.4 263.7Z"/><path fill="#7070bc" d="M672.1 269.2L685.9 264.1L689 253.2L675.2 258.5Z"/><path fill="#6c6cba" d="M685.9 264.1L699.8 259L702.9 247.9L689 253.2Z"/><path fill="#6868b8" d="M699.8 259L713.7 253.8L716.8 242.7L702.9 247.9Z"/><path fill="#6565b7" d="M713.7 253.8L727.7 248.6L730.7 237.4L716.8 242.7Z"/><path fill="#6161b5" d="M727.7 248.6L741.7 243.4L744.6 232L730.7 237.4Z"/><path fill="#5d5db3" d="M741.7 243.4L755.7 238.2L758.6 226.7L744.6 232Z"/><path fill="#5a5ab1" d="M755.7 238.2L769.7 233L772.6 221.4L758.6 226.7Z"/><path fill="#5656b0" d="M769.7 233L783.8 227.8L786.6 216.1L772.6 221.4Z"/><path fill="#b8b8de" d="M384 367.5L397.3 364.4L401.2 356.7L387.9 359.9Z"/><path fill="#b5b5dd" d="M397.3 364.4L410.6 361.2L414.4 353.3L401.2 356.7Z"/><path fill="#b3b3db" d="M410.6 361.2L423.9 357.9L427.8 349.8L414.4 353.3Z"/><path fill="#b0b0da" d="M423.9 357.9L437.3 354.4L441.1 346.2L427.8 349.8Z"/><path fill="#adadd9" d="M437.3 354.4L450.7 350.8L454.5 342.4L441.1 346.2Z"/><path fill="#aaaad7" d="M450.7 350.8L464.1 347.1L467.8 338.5L454.5 342.4Z"/><path fill="#a7a7d6" d="M464.1 347.1L477.6 343.2L481.3 334.5L467.8 338.5Z"/><path fill="#a4a4d4" d="M477.6 343.2L491.1 339.3L494.7 330.4L481.3 334.5Z"/><path fill="#a1a1d3" d="M491.1 339.3L504.6 335.2L508.2 326.2L494.7 330.4Z"/><path fill="#9e9ed1" d="M504.6 335.2L518.1 331.1L521.7 321.9L508.2 326.2Z"/><path fill="#9b9bd0" d="M518.1 331.1L531.7 326.8L535.2 317.5L521.7 321.9Z"/><path fill="#9898ce" d="M531.7 326.8L545.3 322.5L548.7 313L535.2 317.5Z"/><path fill="#9494cd" d="M545.3 322.5L558.9 318L562.3 308.4L548.7 313Z"/><path fill="#9191cb" d="M558.9 318L572.5 313.5L575.9 303.7L562.3 308.4Z"/><path fill="#8d8dca" d="M572.5 313.5L586.2 308.9L589.6 299L575.9 303.7Z"/><path fill="#8a8ac8" d="M586.2 308.9L599.9 304.3L603.3 294.2L589.6 299Z"/><path fill="#8787c6" d="M599.9 304.3L613.7 299.5L617 289.3L603.3 294.2Z"/><path fill="#8383c5" d="M613.7 299.5L627.4 294.8L630.7 284.3L617 289.3Z"/><path fill="#7f7fc3" d="M627.4 294.8L641.2 289.9L644.5 279.4L630.7 284.3Z"/><path fill="#7c7cc1" d="M641.2 289.9L655.1 285L658.3 274.3L644.5 279.4Z"/><path fill="#7878c0" d="M655.1 285L668.9 280.1L672.1 269.2L658.3 274.3Z"/><path fill="#7575be" d="M668.9 280.1L682.8 275.1L685.9 264.1L672.1 269.2Z"/><path fill="#7171bc" d="M682.8 275.1L696.7 270.1L699.8 259L685.9 264.1Z"/><path fill="#6d6dbb" d="M696.7 270.1L710.7 265L713.7 253.8L699.8 259Z"/><path fill="#6a6ab9" d="M710.7 265L724.7 260L727.7 248.6L713.7 253.8Z"/><path fill="#6666b7" d="M724.7 260L738.7 254.9L741.7 243.4L727.7 248.6Z"/><path fill="#6262b6" d="M738.7 254.9L752.7 249.8L755.7 238.2L741.7 243.4Z"/><path fill="#5f5fb4" d="M752.7 249.8L766.8 244.7L769.7 233L755.7 238.2Z"/><path fill="#5b5bb2" d="M766.8 244.7L780.9 239.5L783.8 227.8L769.7 233Z"/><path fill="#bbbbdf" d="M380 375.1L393.3 372.2L397.3 364.4L384 367.5Z"/><path fill="#b8b8de" d="M393.3 372.2L406.7 369.1L410.6 361.2L397.3 364.4Z"/><path fill="#b6b6dd" d="M406.7 369.1L420.1 366L423.9 357.9L410.6 361.2Z"/><path fill="#b3b3db" d="M420.1 366L433.5 362.6L437.3 354.4L423.9 357.9Z"/><path fill="#b0b0da" d="M433.5 362.6L446.9 359.2L450.7 350.8L437.3 354.4Z"/><path fill="#aeaed9" d="M446.9 359.2L460.4 355.6L464.1 347.1L450.7 350.8Z"/><path fill="#ababd7" d="M460.4 355.6L473.9 351.9L477.6 343.2L464.1 347.1Z"/><path fill="#a8a8d6" d="M473.9 351.9L487.4 348.2L491.1 339.3L477.6 343.2Z"/><path fill="#a5a5d5" d="M487.4 348.2L501 344.3L504.6 335.2L491.1 339.3Z"/><path fill="#a2a2d3" d="M501 344.3L514.5 340.3L518.1 331.1L504.6 335.2Z"/><path fill="#9f9fd2" d="M514.5 340.3L528.1 336.2L531.7 326.8L518.1 331.1Z"/><path fill="#9b9bd0" d="M528.1 336.2L541.8 332L545.3 322.5L531.7 326.8Z"/><path fill="#9898cf" d="M541.8 332L555.4 327.7L558.9 318L545.3 322.5Z"/><path fill="#9595cd" d="M555.4 327.7L569.1 323.3L572.5 313.5L558.9 318Z"/><path fill="#9292cc" d="M569.1 323.3L582.8 318.9L586.2 308.9L572.5 313.5Z"/><path fill="#8e8eca" d="M582.8 318.9L596.6 314.4L599.9 304.3L586.2 308.9Z"/><path fill="#8b8bc9" d="M596.6 314.4L610.4 309.8L613.7 299.5L599.9 304.3Z"/><path fill="#8787c7" d="M610.4 309.8L624.2 305.2L627.4 294.8L613.7 299.5Z"/><path fill="#8484c5" d="M624.2 305.2L638 300.5L641.2 289.9L627.4 294.8Z"/><path fill="#8181c4" d="M638 300.5L651.9 295.7L655.1 285L641.2 289.9Z"/><path fill="#7d7dc2" d="M651.9 295.7L665.8 290.9L668.9 280.1L655.1 285Z"/><path fill="#7979c0" d="M665.8 290.9L679.7 286.1L682.8 275.1L668.9 280.1Z"/><path fill="#7676bf" d="M679.7 286.1L693.6 281.2L696.7 270.1L682.8 275.1Z"/><path fill="#7272bd" d="M693.6 281.2L707.6 276.3L710.7 265L696.7 270.1Z"/><path fill="#6f6fbb" d="M707.6 276.3L721.7 271.3L724.7 260L710.7 265Z"/><path fill="#6b6bba" d="M721.7 271.3L735.7 266.3L738.7 254.9L724.7 260Z"/><path fill="#6868b8" d="M735.7 266.3L749.8 261.4L752.7 249.8L738.7 254.9Z"/><path fill="#6464b6" d="M749.8 261.4L763.9 256.3L766.8 244.7L752.7 249.8Z"/><path fill="#6161b5" d="M763.9 256.3L778 251.3L780.9 239.5L766.8 244.7Z"/><path fill="#bebee0" d="M376.1 382.8L389.4 380L393.3 372.2L380 375.1Z"/><path fill="#bbbbdf" d="M389.4 380L402.8 377.1L406.7 369.1L393.3 372.2Z"/><path fill="#b9b9de" d="M402.8 377.1L416.3 374L420.1 366L406.7 369.1Z"/><path fill="#b6b6dd" d="M416.3 374L429.7 370.9L433.5 362.6L420.1 366Z"/><path fill="#b3b3dc" d="M429.7 370.9L443.2 367.6L446.9 359.2L433.5 362.6Z"/><path fill="#b1b1da" d="M443.2 367.6L456.7 364.2L460.4 355.6L446.9 359.2Z"/><path fill="#aeaed9" d="M456.7 364.2L470.2 360.7L473.9 351.9L460.4 355.6Z"/><path fill="#ababd8" d="M470.2 360.7L483.8 357L487.4 348.2L473.9 351.9Z"/><path fill="#a8a8d6" d="M483.8 357L497.4 353.3L501 344.3L487.4 348.2Z"/><path fill="#a5a5d5" d="M497.4 353.3L511 349.5L514.5 340.3L501 344.3Z"/><path fill="#a2a2d4" d="M511 349.5L524.6 345.5L528.1 336.2L514.5 340.3Z"/><path fill="#9f9fd2" d="M524.6 345.5L538.3 341.5L541.8 332L528.1 336.2Z"/><path fill="#9c9cd1" d="M538.3 341.5L552 337.4L555.4 327.7L541.8 332Z"/><path fill="#9999cf" d="M552 337.4L565.7 333.2L569.1 323.3L555.4 327.7Z"/><path fill="#9696ce" d="M565.7 333.2L579.5 328.9L582.8 318.9L569.1 323.3Z"/><path fill="#9393cc" d="M579.5 328.9L593.2 324.6L596.6 314.4L582.8 318.9Z"/><path fill="#8f8fcb" d="M593.2 324.6L607.1 320.1L610.4 309.8L596.6 314.4Z"/><path fill="#8c8cc9" d="M607.1 320.1L620.9 315.6L624.2 305.2L610.4 309.8Z"/><path fill="#8989c7" d="M620.9 315.6L634.8 311.1L638 300.5L624.2 305.2Z"/><path fill="#8585c6" d="M634.8 311.1L648.7 306.5L651.9 295.7L638 300.5Z"/><path fill="#8282c4" d="M648.7 306.5L662.6 301.8L665.8 290.9L651.9 295.7Z"/><path fill="#7e7ec3" d="M662.6 301.8L676.6 297.1L679.7 286.1L665.8 290.9Z"/><path fill="#7b7bc1" d="M676.6 297.1L690.5 292.3L693.6 281.2L679.7 286.1Z"/><path fill="#7777bf" d="M690.5 292.3L704.6 287.6L707.6 276.3L693.6 281.2Z"/><path fill="#7474be" d="M704.6 287.6L718.6 282.7L721.7 271.3L707.6 276.3Z"/><path fill="#7070bc" d="M718.6 282.7L732.7 277.9L735.7 266.3L721.7 271.3Z"/><path fill="#6d6dba" d="M732.7 277.9L746.8 273L749.8 261.4L735.7 266.3Z"/><path fill="#6969b9" d="M746.8 273L761 268.1L763.9 256.3L749.8 261.4Z"/><path fill="#6666b7" d="M761 268.1L775.1 263.2L778 251.3L763.9 256.3Z"/><path fill="#c0c0e2" d="M372.1 390.4L385.5 387.8L389.4 380L376.1 382.8Z"/><path fill="#bebee0" d="M385.5 387.8L399 385L402.8 377.1L389.4 380Z"/><path fill="#bcbcdf" d="M399 385L412.4 382.1L416.3 374L402.8 377.1Z"/><path fill="#b9b9de" d="M412.4 382.1L425.9 379.1L429.7 370.9L416.3 374Z"/><path fill="#b7b7dd" d="M425.9 379.1L439.4 376L443.2 367.6L429.7 370.9Z"/><path fill="#b4b4dc" d="M439.4 376L453 372.7L456.7 364.2L443.2 367.6Z"/><path fill="#b1b1db" d="M453 372.7L466.5 369.4L470.2 360.7L456.7 364.2Z"/><path fill="#afafd9" d="M466.5 369.4L480.1 365.9L483.8 357L470.2 360.7Z"/><path fill="#acacd8" d="M480.1 365.9L493.8 362.4L497.4 353.3L483.8 357Z"/><path fill="#a9a9d7" d="M493.8 362.4L507.4 358.7L511 349.5L497.4 353.3Z"/><path fill="#a6a6d5" d="M507.4 358.7L521.1 354.9L524.6 345.5L511 349.5Z"/><path fill="#a3a3d4" d="M521.1 354.9L534.8 351.1L538.3 341.5L524.6 345.5Z"/><path fill="#a0a0d2" d="M534.8 351.1L548.5 347.1L552 337.4L538.3 341.5Z"/><path fill="#9d9dd1" d="M548.5 347.1L562.3 343.1L565.7 333.2L552 337.4Z"/><path fill="#9a9ad0" d="M562.3 343.1L576.1 338.9L579.5 328.9L565.7 333.2Z"/><path fill="#9797ce" d="M576.1 338.9L589.9 334.7L593.2 324.6L579.5 328.9Z"/><path fill="#9494cd" d="M589.9 334.7L603.7 330.5L607.1 320.1L593.2 324.6Z"/><path fill="#9090cb" d="M603.7 330.5L617.6 326.1L620.9 315.6L607.1 320.1Z"/><path fill="#8d8dca" d="M617.6 326.1L631.5 321.7L634.8 311.1L620.9 315.6Z"/><path fill="#8a8ac8" d="M631.5 321.7L645.5 317.3L648.7 306.5L634.8 311.1Z"/><path fill="#8686c6" d="M645.5 317.3L659.4 312.7L662.6 301.8L648.7 306.5Z"/><path fill="#8383c5" d="M659.4 312.7L673.4 308.2L676.6 297.1L662.6 301.8Z"/><path fill="#8080c3" d="M673.4 308.2L687.4 303.5L690.5 292.3L676.6 297.1Z"/><path fill="#7c7cc2" d="M687.4 303.5L701.5 298.9L704.6 287.6L690.5 292.3Z"/><path fill="#7979c0" d="M701.5 298.9L715.6 294.2L718.6 282.7L704.6 287.6Z"/><path fill="#7575be" d="M715.6 294.2L729.7 289.4L732.7 277.9L718.6 282.7Z"/><path fill="#7272bd" d="M729.7 289.4L743.9 284.6L746.8 273L732.7 277.9Z"/><path fill="#6f6fbb" d="M743.9 284.6L758 279.8L761 268.1L746.8 273Z"/><path fill="#6b6bba" d="M758 279.8L772.2 275L775.1 263.2L761 268.1Z"/><path fill="#c3c3e3" d="M368.2 398L381.6 395.5L385.5 387.8L372.1 390.4Z"/><path fill="#c1c1e2" d="M381.6 395.5L395.1 392.9L399 385L385.5 387.8Z"/><path fill="#bebee1" d="M395.1 392.9L408.6 390.2L412.4 382.1L399 385Z"/><path fill="#bcbce0" d="M408.6 390.2L422.1 387.4L425.9 379.1L412.4 382.1Z"/><path fill="#babade" d="M422.1 387.4L435.7 384.4L439.4 376L425.9 379.1Z"/><path fill="#b7b7dd" d="M435.7 384.4L449.3 381.3L453 372.7L439.4 376Z"/><path fill="#b5b5dc" d="M449.3 381.3L462.9 378.1L466.5 369.4L453 372.7Z"/><path fill="#b2b2db" d="M462.9 378.1L476.5 374.8L480.1 365.9L466.5 369.4Z"/><path fill="#afafda" d="M476.5 374.8L490.1 371.4L493.8 362.4L480.1 365.9Z"/><path fill="#adadd8" d="M490.1 371.4L503.8 367.9L507.4 358.7L493.8 362.4Z"/><path fill="#aaaad7" d="M503.8 367.9L517.5 364.3L521.1 354.9L507.4 358.7Z"/><path fill="#a7a7d6" d="M517.5 364.3L531.3 360.6L534.8 351.1L521.1 354.9Z"/><path fill="#a4a4d4" d="M531.3 360.6L545.1 356.8L548.5 347.1L534.8 351.1Z"/><path fill="#a1a1d3" d="M545.1 356.8L558.9 352.9L562.3 343.1L548.5 347.1Z"/><path fill="#9e9ed1" d="M558.9 352.9L572.7 349L576.1 338.9L562.3 343.1Z"/><path fill="#9b9bd0" d="M572.7 349L586.5 344.9L589.9 334.7L576.1 338.9Z"/><path fill="#9898cf" d="M586.5 344.9L600.4 340.8L603.7 330.5L589.9 334.7Z"/><path fill="#9595cd" d="M600.4 340.8L614.3 336.6L617.6 326.1L603.7 330.5Z"/><path fill="#9292cc" d="M614.3 336.6L628.3 332.4L631.5 321.7L617.6 326.1Z"/><path fill="#8e8eca" d="M628.3 332.4L642.2 328.1L645.5 317.3L631.5 321.7Z"/><path fill="#8b8bc9" d="M642.2 328.1L656.2 323.7L659.4 312.7L645.5 317.3Z"/><path fill="#8888c7" d="M656.2 323.7L670.3 319.2L673.4 308.2L659.4 312.7Z"/><path fill="#8585c6" d="M670.3 319.2L684.3 314.8L687.4 303.5L673.4 308.2Z"/><path fill="#8181c4" d="M684.3 314.8L698.4 310.2L701.5 298.9L687.4 303.5Z"/><path fill="#7e7ec2" d="M698.4 310.2L712.5 305.6L715.6 294.2L701.5 298.9Z"/><path fill="#7b7bc1" d="M712.5 305.6L726.7 301L729.7 289.4L715.6 294.2Z"/><path fill="#7777bf" d="M726.7 301L740.9 296.4L743.9 284.6L729.7 289.4Z"/><path fill="#7474be" d="M740.9 296.4L755.1 291.7L758 279.8L743.9 284.6Z"/><path fill="#7070bc" d="M755.1 291.7L769.3 286.9L772.2 275L758 279.8Z"/><path fill="#c6c6e4" d="M364.2 405.6L377.7 403.3L381.6 395.5L368.2 398Z"/><path fill="#c4c4e3" d="M377.7 403.3L391.2 400.9L395.1 392.9L381.6 395.5Z"/><path fill="#c1c1e2" d="M391.2 400.9L404.8 398.3L408.6 390.2L395.1 392.9Z"/><path fill="#bfbfe1" d="M404.8 398.3L418.3 395.6L422.1 387.4L408.6 390.2Z"/><path fill="#bdbde0" d="M418.3 395.6L431.9 392.8L435.7 384.4L422.1 387.4Z"/><path fill="#babadf" d="M431.9 392.8L445.5 389.9L449.3 381.3L435.7 384.4Z"/><path fill="#b8b8de" d="M445.5 389.9L459.2 386.9L462.9 378.1L449.3 381.3Z"/><path fill="#b5b5dc" d="M459.2 386.9L472.8 383.7L476.5 374.8L462.9 378.1Z"/><path fill="#b3b3db" d="M472.8 383.7L486.5 380.5L490.1 371.4L476.5 374.8Z"/><path fill="#b0b0da" d="M486.5 380.5L500.3 377.2L503.8 367.9L490.1 371.4Z"/><path fill="#adadd9" d="M500.3 377.2L514 373.7L517.5 364.3L503.8 367.9Z"/><path fill="#ababd7" d="M514 373.7L527.8 370.2L531.3 360.6L517.5 364.3Z"/><path fill="#a8a8d6" d="M527.8 370.2L541.6 366.6L545.1 356.8L531.3 360.6Z"/><path fill="#a5a5d5" d="M541.6 366.6L555.4 362.8L558.9 352.9L545.1 356.8Z"/><path fill="#a2a2d3" d="M555.4 362.8L569.3 359L572.7 349L558.9 352.9Z"/><path fill="#9f9fd2" d="M569.3 359L583.2 355.2L586.5 344.9L572.7 349Z"/><path fill="#9c9cd1" d="M583.2 355.2L597.1 351.2L600.4 340.8L586.5 344.9Z"/><path fill="#9999cf" d="M597.1 351.2L611 347.2L614.3 336.6L600.4 340.8Z"/><path fill="#9696ce" d="M611 347.2L625 343.1L628.3 332.4L614.3 336.6Z"/><path fill="#9393cc" d="M625 343.1L639 338.9L642.2 328.1L628.3 332.4Z"/><path fill="#9090cb" d="M639 338.9L653 334.7L656.2 323.7L642.2 328.1Z"/><path fill="#8d8dc9" d="M653 334.7L667.1 330.4L670.3 319.2L656.2 323.7Z"/><path fill="#8989c8" d="M667.1 330.4L681.2 326L684.3 314.8L670.3 319.2Z"/><path fill="#8686c6" d="M681.2 326L695.3 321.6L698.4 310.2L684.3 314.8Z"/><path fill="#8383c5" d="M695.3 321.6L709.5 317.1L712.5 305.6L698.4 310.2Z"/><path fill="#8080c3" d="M709.5 317.1L723.7 312.6L726.7 301L712.5 305.6Z"/><path fill="#7c7cc2" d="M723.7 312.6L737.9 308.1L740.9 296.4L726.7 301Z"/><path fill="#7979c0" d="M737.9 308.1L752.1 303.5L755.1 291.7L740.9 296.4Z"/><path fill="#7676bf" d="M752.1 303.5L766.4 298.9L769.3 286.9L755.1 291.7Z"/><path fill="#c8c8e5" d="M360.3 413.2L373.8 411.1L377.7 403.3L364.2 405.6Z"/><path fill="#c6c6e4" d="M373.8 411.1L387.3 408.8L391.2 400.9L377.7 403.3Z"/><path fill="#c4c4e3" d="M387.3 408.8L400.9 406.4L404.8 398.3L391.2 400.9Z"/><path fill="#c2c2e2" d="M400.9 406.4L414.5 403.9L418.3 395.6L404.8 398.3Z"/><path fill="#c0c0e1" d="M414.5 403.9L428.2 401.2L431.9 392.8L418.3 395.6Z"/><path fill="#bebee0" d="M428.2 401.2L441.8 398.5L445.5 389.9L431.9 392.8Z"/><path fill="#bbbbdf" d="M441.8 398.5L455.5 395.6L459.2 386.9L445.5 389.9Z"/><path fill="#b9b9de" d="M455.5 395.6L469.2 392.6L472.8 383.7L459.2 386.9Z"/><path fill="#b6b6dd" d="M469.2 392.6L482.9 389.6L486.5 380.5L472.8 383.7Z"/><path fill="#b4b4dc" d="M482.9 389.6L496.7 386.4L500.3 377.2L486.5 380.5Z"/><path fill="#b1b1da" d="M496.7 386.4L510.5 383.1L514 373.7L500.3 377.2Z"/><path fill="#aeaed9" d="M510.5 383.1L524.3 379.8L527.8 370.2L514 373.7Z"/><path fill="#acacd8" d="M524.3 379.8L538.1 376.3L541.6 366.6L527.8 370.2Z"/><path fill="#a9a9d7" d="M538.1 376.3L552 372.8L555.4 362.8L541.6 366.6Z"/><path fill="#a6a6d5" d="M552 372.8L565.9 369.1L569.3 359L555.4 362.8Z"/><path fill="#a3a3d4" d="M565.9 369.1L579.8 365.4L583.2 355.2L569.3 359Z"/><path fill="#a0a0d3" d="M579.8 365.4L593.7 361.6L597.1 351.2L583.2 355.2Z"/><path fill="#9e9ed1" d="M593.7 361.6L607.7 357.7L611 347.2L597.1 351.2Z"/><path fill="#9b9bd0" d="M607.7 357.7L621.7 353.8L625 343.1L611 347.2Z"/><path fill="#9898ce" d="M621.7 353.8L635.8 349.8L639 338.9L625 343.1Z"/><path fill="#9494cd" d="M635.8 349.8L649.8 345.7L653 334.7L639 338.9Z"/><path fill="#9191cc" d="M649.8 345.7L663.9 341.5L667.1 330.4L653 334.7Z"/><path fill="#8e8eca" d="M663.9 341.5L678.1 337.3L681.2 326L667.1 330.4Z"/><path fill="#8b8bc9" d="M678.1 337.3L692.2 333L695.3 321.6L681.2 326Z"/><path fill="#8888c7" d="M692.2 333L706.4 328.7L709.5 317.1L695.3 321.6Z"/><path fill="#8585c6" d="M706.4 328.7L720.6 324.3L723.7 312.6L709.5 317.1Z"/><path fill="#8282c4" d="M720.6 324.3L734.9 319.9L737.9 308.1L723.7 312.6Z"/><path fill="#7e7ec3" d="M734.9 319.9L749.2 315.4L752.1 303.5L737.9 308.1Z"/><path fill="#7b7bc1" d="M749.2 315.4L763.5 310.9L766.4 298.9L752.1 303.5Z"/><path fill="#cbcbe7" d="M356.3 420.8L369.9 418.8L373.8 411.1L360.3 413.2Z"/><path fill="#c9c9e6" d="M369.9 418.8L383.5 416.7L387.3 408.8L373.8 411.1Z"/><path fill="#c7c7e5" d="M383.5 416.7L397.1 414.5L400.9 406.4L387.3 408.8Z"/><path fill="#c5c5e4" d="M397.1 414.5L410.7 412.1L414.5 403.9L400.9 406.4Z"/><path fill="#c3c3e3" d="M410.7 412.1L424.4 409.6L428.2 401.2L414.5 403.9Z"/><path fill="#c1c1e2" d="M424.4 409.6L438.1 407L441.8 398.5L428.2 401.2Z"/><path fill="#bebee1" d="M438.1 407L451.8 404.4L455.5 395.6L441.8 398.5Z"/><path fill="#bcbce0" d="M451.8 404.4L465.5 401.6L469.2 392.6L455.5 395.6Z"/><path fill="#babade" d="M465.5 401.6L479.3 398.7L482.9 389.6L469.2 392.6Z"/><path fill="#b7b7dd" d="M479.3 398.7L493.1 395.7L496.7 386.4L482.9 389.6Z"/><path fill="#b5b5dc" d="M493.1 395.7L506.9 392.6L510.5 383.1L496.7 386.4Z"/><path fill="#b2b2db" d="M506.9 392.6L520.8 389.4L524.3 379.8L510.5 383.1Z"/><path fill="#b0b0da" d="M520.8 389.4L534.6 386.1L538.1 376.3L524.3 379.8Z"/><path fill="#adadd9" d="M534.6 386.1L548.5 382.7L552 372.8L538.1 376.3Z"/><path fill="#aaaad7" d="M548.5 382.7L562.5 379.2L565.9 369.1L552 372.8Z"/><path fill="#a8a8d6" d="M562.5 379.2L576.4 375.7L579.8 365.4L565.9 369.1Z"/><path fill="#a5a5d5" d="M576.4 375.7L590.4 372L593.7 361.6L579.8 365.4Z"/><path fill="#a2a2d3" d="M590.4 372L604.4 368.3L607.7 357.7L593.7 361.6Z"/><path fill="#9f9fd2" d="M604.4 368.3L618.5 364.5L621.7 353.8L607.7 357.7Z"/><path fill="#9c9cd1" d="M618.5 364.5L632.5 360.6L635.8 349.8L621.7 353.8Z"/><path fill="#9999cf" d="M632.5 360.6L646.6 356.7L649.8 345.7L635.8 349.8Z"/><path fill="#9696ce" d="M646.6 356.7L660.8 352.7L663.9 341.5L649.8 345.7Z"/><path fill="#9393cc" d="M660.8 352.7L674.9 348.6L678.1 337.3L663.9 341.5Z"/><path fill="#9090cb" d="M674.9 348.6L689.1 344.5L692.2 333L678.1 337.3Z"/><path fill="#8d8dc9" d="M689.1 344.5L703.3 340.3L706.4 328.7L692.2 333Z"/><path fill="#8a8ac8" d="M703.3 340.3L717.6 336L720.6 324.3L706.4 328.7Z"/><path fill="#8787c7" d="M717.6 336L731.9 331.7L734.9 319.9L720.6 324.3Z"/><path fill="#8383c5" d="M731.9 331.7L746.2 327.4L749.2 315.4L734.9 319.9Z"/><path fill="#8080c4" d="M746.2 327.4L760.5 323L763.5 310.9L749.2 315.4Z"/><path fill="#cecee8" d="M352.4 428.4L366 426.6L369.9 418.8L356.3 420.8Z"/><path fill="#cccce7" d="M366 426.6L379.6 424.6L383.5 416.7L369.9 418.8Z"/><path fill="#cacae6" d="M379.6 424.6L393.3 422.5L397.1 414.5L383.5 416.7Z"/><path fill="#c8c8e5" d="M393.3 422.5L406.9 420.4L410.7 412.1L397.1 414.5Z"/><path fill="#c6c6e4" d="M406.9 420.4L420.6 418L424.4 409.6L410.7 412.1Z"/><path fill="#c4c4e3" d="M420.6 418L434.4 415.6L438.1 407L424.4 409.6Z"/><path fill="#c2c2e2" d="M434.4 415.6L448.1 413.1L451.8 404.4L438.1 407Z"/><path fill="#bfbfe1" d="M448.1 413.1L461.9 410.5L465.5 401.6L451.8 404.4Z"/><path fill="#bdbde0" d="M461.9 410.5L475.7 407.8L479.3 398.7L465.5 401.6Z"/><path fill="#bbbbdf" d="M475.7 407.8L489.5 404.9L493.1 395.7L479.3 398.7Z"/><path fill="#b8b8de" d="M489.5 404.9L503.4 402L506.9 392.6L493.1 395.7Z"/><path fill="#b6b6dd" d="M503.4 402L517.2 399L520.8 389.4L506.9 392.6Z"/><path fill="#b4b4dc" d="M517.2 399L531.1 395.8L534.6 386.1L520.8 389.4Z"/><path fill="#b1b1da" d="M531.1 395.8L545.1 392.6L548.5 382.7L534.6 386.1Z"/><path fill="#aeaed9" d="M545.1 392.6L559 389.3L562.5 379.2L548.5 382.7Z"/><path fill="#acacd8" d="M559 389.3L573 385.9L576.4 375.7L562.5 379.2Z"/><path fill="#a9a9d7" d="M573 385.9L587 382.5L590.4 372L576.4 375.7Z"/><path fill="#a6a6d5" d="M587 382.5L601.1 378.9L604.4 368.3L590.4 372Z"/><path fill="#a3a3d4" d="M601.1 378.9L615.2 375.3L618.5 364.5L604.4 368.3Z"/><path fill="#a1a1d3" d="M615.2 375.3L629.3 371.6L632.5 360.6L618.5 364.5Z"/><path fill="#9e9ed1" d="M629.3 371.6L643.4 367.8L646.6 356.7L632.5 360.6Z"/><path fill="#9b9bd0" d="M643.4 367.8L657.6 363.9L660.8 352.7L646.6 356.7Z"/><path fill="#9898cf" d="M657.6 363.9L671.8 360L674.9 348.6L660.8 352.7Z"/><path fill="#9595cd" d="M671.8 360L686 356L689.1 344.5L674.9 348.6Z"/><path fill="#9292cc" d="M686 356L700.2 351.9L703.3 340.3L689.1 344.5Z"/><path fill="#8f8fca" d="M700.2 351.9L714.5 347.8L717.6 336L703.3 340.3Z"/><path fill="#8c8cc9" d="M714.5 347.8L728.8 343.6L731.9 331.7L717.6 336Z"/><path fill="#8989c7" d="M728.8 343.6L743.2 339.4L746.2 327.4L731.9 331.7Z"/><path fill="#8686c6" d="M743.2 339.4L757.6 335.1L760.5 323L746.2 327.4Z"/><path fill="#d0d0e9" d="M348.4 436L362.1 434.3L366 426.6L352.4 428.4Z"/><path fill="#cecee8" d="M362.1 434.3L375.7 432.5L379.6 424.6L366 426.6Z"/><path fill="#cdcde7" d="M375.7 432.5L389.4 430.6L393.3 422.5L379.6 424.6Z"/><path fill="#cbcbe7" d="M389.4 430.6L403.1 428.6L406.9 420.4L393.3 422.5Z"/><path fill="#c9c9e6" d="M403.1 428.6L416.9 426.5L420.6 418L406.9 420.4Z"/><path fill="#c7c7e5" d="M416.9 426.5L430.6 424.2L434.4 415.6L420.6 418Z"/><path fill="#c5c5e4" d="M430.6 424.2L444.4 421.9L448.1 413.1L434.4 415.6Z"/><path fill="#c3c3e3" d="M444.4 421.9L458.2 419.4L461.9 410.5L448.1 413.1Z"/><path fill="#c1c1e2" d="M458.2 419.4L472 416.9L475.7 407.8L461.9 410.5Z"/><path fill="#bebee1" d="M472 416.9L485.9 414.2L489.5 404.9L475.7 407.8Z"/><path fill="#bcbce0" d="M485.9 414.2L499.8 411.4L503.4 402L489.5 404.9Z"/><path fill="#babadf" d="M499.8 411.4L513.7 408.6L517.2 399L503.4 402Z"/><path fill="#b7b7dd" d="M513.7 408.6L527.6 405.6L531.1 395.8L517.2 399Z"/><path fill="#b5b5dc" d="M527.6 405.6L541.6 402.6L545.1 392.6L531.1 395.8Z"/><path fill="#b2b2db" d="M541.6 402.6L555.6 399.5L559 389.3L545.1 392.6Z"/><path fill="#b0b0da" d="M555.6 399.5L569.6 396.2L573 385.9L559 389.3Z"/><path fill="#adadd9" d="M569.6 396.2L583.7 392.9L587 382.5L573 385.9Z"/><path fill="#ababd7" d="M583.7 392.9L597.8 389.5L601.1 378.9L587 382.5Z"/><path fill="#a8a8d6" d="M597.8 389.5L611.9 386.1L615.2 375.3L601.1 378.9Z"/><path fill="#a5a5d5" d="M611.9 386.1L626 382.5L629.3 371.6L615.2 375.3Z"/><path fill="#a2a2d4" d="M626 382.5L640.2 378.9L643.4 367.8L629.3 371.6Z"/><path fill="#a0a0d2" d="M640.2 378.9L654.4 375.2L657.6 363.9L643.4 367.8Z"/><path fill="#9d9dd1" d="M654.4 375.2L668.6 371.4L671.8 360L657.6 363.9Z"/><path fill="#9a9ad0" d="M668.6 371.4L682.9 367.5L686 356L671.8 360Z"/><path fill="#9797ce" d="M682.9 367.5L697.1 363.6L700.2 351.9L686 356Z"/><path fill="#9494cd" d="M697.1 363.6L711.5 359.6L714.5 347.8L700.2 351.9Z"/><path fill="#9191cb" d="M711.5 359.6L725.8 355.5L728.8 343.6L714.5 347.8Z"/><path fill="#8e8eca" d="M725.8 355.5L740.2 351.4L743.2 339.4L728.8 343.6Z"/><path fill="#8b8bc8" d="M740.2 351.4L754.6 347.3L757.6 335.1L743.2 339.4Z"/><path fill="#d3d3ea" d="M344.5 443.6L358.2 442.1L362.1 434.3L348.4 436Z"/><path fill="#d1d1e9" d="M358.2 442.1L371.9 440.5L375.7 432.5L362.1 434.3Z"/><path fill="#cfcfe9" d="M371.9 440.5L385.6 438.7L389.4 430.6L375.7 432.5Z"/><path fill="#cecee8" d="M385.6 438.7L399.3 436.9L403.1 428.6L389.4 430.6Z"/><path fill="#cccce7" d="M399.3 436.9L413.1 434.9L416.9 426.5L403.1 428.6Z"/><path fill="#cacae6" d="M413.1 434.9L426.9 432.8L430.6 424.2L416.9 426.5Z"/><path fill="#c8c8e5" d="M426.9 432.8L440.7 430.6L444.4 421.9L430.6 424.2Z"/><path fill="#c6c6e4" d="M440.7 430.6L454.6 428.4L458.2 419.4L444.4 421.9Z"/><path fill="#c4c4e3" d="M454.6 428.4L468.4 426L472 416.9L458.2 419.4Z"/><path fill="#c2c2e2" d="M468.4 426L482.3 423.5L485.9 414.2L472 416.9Z"/><path fill="#c0c0e1" d="M482.3 423.5L496.2 420.9L499.8 411.4L485.9 414.2Z"/><path fill="#bdbde0" d="M496.2 420.9L510.2 418.2L513.7 408.6L499.8 411.4Z"/><path fill="#bbbbdf" d="M510.2 418.2L524.2 415.4L527.6 405.6L513.7 408.6Z"/><path fill="#b9b9de" d="M524.2 415.4L538.2 412.6L541.6 402.6L527.6 405.6Z"/><path fill="#b6b6dd" d="M538.2 412.6L552.2 409.6L555.6 399.5L541.6 402.6Z"/><path fill="#b4b4dc" d="M552.2 409.6L566.2 406.6L569.6 396.2L555.6 399.5Z"/><path fill="#b1b1db" d="M566.2 406.6L580.3 403.4L583.7 392.9L569.6 396.2Z"/><path fill="#afafd9" d="M580.3 403.4L594.4 400.2L597.8 389.5L583.7 392.9Z"/><path fill="#acacd8" d="M594.4 400.2L608.6 396.9L611.9 386.1L597.8 389.5Z"/><path fill="#aaaad7" d="M608.6 396.9L622.7 393.5L626 382.5L611.9 386.1Z"/><path fill="#a7a7d6" d="M622.7 393.5L636.9 390L640.2 378.9L626 382.5Z"/><path fill="#a4a4d4" d="M636.9 390L651.2 386.4L654.4 375.2L640.2 378.9Z"/><path fill="#a2a2d3" d="M651.2 386.4L665.4 382.8L668.6 371.4L654.4 375.2Z"/><path fill="#9f9fd2" d="M665.4 382.8L679.7 379.1L682.9 367.5L668.6 371.4Z"/><path fill="#9c9cd0" d="M679.7 379.1L694 375.3L697.1 363.6L682.9 367.5Z"/><path fill="#9999cf" d="M694 375.3L708.4 371.4L711.5 359.6L697.1 363.6Z"/><path fill="#9696ce" d="M708.4 371.4L722.8 367.5L725.8 355.5L711.5 359.6Z"/><path fill="#9393cc" d="M722.8 367.5L737.2 363.5L740.2 351.4L725.8 355.5Z"/><path fill="#9090cb" d="M737.2 363.5L751.6 359.5L754.6 347.3L740.2 351.4Z"/><path fill="#d5d5eb" d="M340.6 451.2L354.3 449.8L358.2 442.1L344.5 443.6Z"/><path fill="#d4d4eb" d="M354.3 449.8L368 448.4L371.9 440.5L358.2 442.1Z"/><path fill="#d2d2ea" d="M368 448.4L381.8 446.8L385.6 438.7L371.9 440.5Z"/><path fill="#d1d1e9" d="M381.8 446.8L395.5 445.1L399.3 436.9L385.6 438.7Z"/><path fill="#cfcfe8" d="M395.5 445.1L409.3 443.3L413.1 434.9L399.3 436.9Z"/><path fill="#cdcde8" d="M409.3 443.3L423.2 441.4L426.9 432.8L413.1 434.9Z"/><path fill="#cbcbe7" d="M423.2 441.4L437 439.4L440.7 430.6L426.9 432.8Z"/><path fill="#c9c9e6" d="M437 439.4L450.9 437.3L454.6 428.4L440.7 430.6Z"/><path fill="#c7c7e5" d="M450.9 437.3L464.8 435.1L468.4 426L454.6 428.4Z"/><path fill="#c5c5e4" d="M464.8 435.1L478.7 432.8L482.3 423.5L468.4 426Z"/><path fill="#c3c3e3" d="M478.7 432.8L492.7 430.4L496.2 420.9L482.3 423.5Z"/><path fill="#c1c1e2" d="M492.7 430.4L506.6 427.9L510.2 418.2L496.2 420.9Z"/><path fill="#bfbfe1" d="M506.6 427.9L520.6 425.3L524.2 415.4L510.2 418.2Z"/><path fill="#bdbde0" d="M520.6 425.3L534.7 422.6L538.2 412.6L524.2 415.4Z"/><path fill="#babadf" d="M534.7 422.6L548.7 419.8L552.2 409.6L538.2 412.6Z"/><path fill="#b8b8de" d="M548.7 419.8L562.8 416.9L566.2 406.6L552.2 409.6Z"/><path fill="#b6b6dd" d="M562.8 416.9L576.9 413.9L580.3 403.4L566.2 406.6Z"/><path fill="#b3b3db" d="M576.9 413.9L591.1 410.9L594.4 400.2L580.3 403.4Z"/><path fill="#b1b1da" d="M591.1 410.9L605.3 407.7L608.6 396.9L594.4 400.2Z"/><path fill="#aeaed9" d="M605.3 407.7L619.5 404.5L622.7 393.5L608.6 396.9Z"/><path fill="#acacd8" d="M619.5 404.5L633.7 401.1L636.9 390L622.7 393.5Z"/><path fill="#a9a9d7" d="M633.7 401.1L648 397.7L651.2 386.4L636.9 390Z"/><path fill="#a6a6d5" d="M648 397.7L662.2 394.3L665.4 382.8L651.2 386.4Z"/><path fill="#a4a4d4" d="M662.2 394.3L676.6 390.7L679.7 379.1L665.4 382.8Z"/><path fill="#a1a1d3" d="M676.6 390.7L690.9 387L694 375.3L679.7 379.1Z"/><path fill="#9e9ed1" d="M690.9 387L705.3 383.3L708.4 371.4L694 375.3Z"/><path fill="#9b9bd0" d="M705.3 383.3L719.7 379.5L722.8 367.5L708.4 371.4Z"/><path fill="#9898cf" d="M719.7 379.5L734.1 375.7L737.2 363.5L722.8 367.5Z"/><path fill="#9595cd" d="M734.1 375.7L748.6 371.7L751.6 359.5L737.2 363.5Z"/><path fill="#d8d8ed" d="M336.6 458.8L350.4 457.6L354.3 449.8L340.6 451.2Z"/><path fill="#d7d7ec" d="M350.4 457.6L364.1 456.3L368 448.4L354.3 449.8Z"/><path fill="#d5d5eb" d="M364.1 456.3L377.9 454.9L381.8 446.8L368 448.4Z"/><path fill="#d3d3eb" d="M377.9 454.9L391.7 453.3L395.5 445.1L381.8 446.8Z"/><path fill="#d2d2ea" d="M391.7 453.3L405.6 451.7L409.3 443.3L395.5 445.1Z"/><path fill="#d0d0e9" d="M405.6 451.7L419.4 450L423.2 441.4L409.3 443.3Z"/><path fill="#cecee8" d="M419.4 450L433.3 448.2L437 439.4L423.2 441.4Z"/><path fill="#cdcde7" d="M433.3 448.2L447.2 446.2L450.9 437.3L437 439.4Z"/><path fill="#cbcbe7" d="M447.2 446.2L461.2 444.2L464.8 435.1L450.9 437.3Z"/><path fill="#c9c9e6" d="M461.2 444.2L475.1 442.1L478.7 432.8L464.8 435.1Z"/><path fill="#c7c7e5" d="M475.1 442.1L489.1 439.8L492.7 430.4L478.7 432.8Z"/><path fill="#c5c5e4" d="M489.1 439.8L503.1 437.5L506.6 427.9L492.7 430.4Z"/><path fill="#c3c3e3" d="M503.1 437.5L517.1 435.1L520.6 425.3L506.6 427.9Z"/><path fill="#c1c1e2" d="M517.1 435.1L531.2 432.6L534.7 422.6L520.6 425.3Z"/><path fill="#bebee1" d="M531.2 432.6L545.3 430L548.7 419.8L534.7 422.6Z"/><path fill="#bcbce0" d="M545.3 430L559.4 427.2L562.8 416.9L548.7 419.8Z"/><path fill="#babadf" d="M559.4 427.2L573.6 424.4L576.9 413.9L562.8 416.9Z"/><path fill="#b8b8dd" d="M573.6 424.4L587.7 421.5L591.1 410.9L576.9 413.9Z"/><path fill="#b5b5dc" d="M587.7 421.5L601.9 418.6L605.3 407.7L591.1 410.9Z"/><path fill="#b3b3db" d="M601.9 418.6L616.2 415.5L619.5 404.5L605.3 407.7Z"/><path fill="#b0b0da" d="M616.2 415.5L630.4 412.3L633.7 401.1L619.5 404.5Z"/><path fill="#aeaed9" d="M630.4 412.3L644.7 409.1L648 397.7L633.7 401.1Z"/><path fill="#ababd8" d="M644.7 409.1L659 405.7L662.2 394.3L648 397.7Z"/><path fill="#a8a8d6" d="M659 405.7L673.4 402.3L676.6 390.7L662.2 394.3Z"/><path fill="#a6a6d5" d="M673.4 402.3L687.8 398.8L690.9 387L676.6 390.7Z"/><path fill="#a3a3d4" d="M687.8 398.8L702.2 395.3L705.3 383.3L690.9 387Z"/><path fill="#a0a0d3" d="M702.2 395.3L716.6 391.6L719.7 379.5L705.3 383.3Z"/><path fill="#9d9dd1" d="M716.6 391.6L731.1 387.9L734.1 375.7L719.7 379.5Z"/><path fill="#9b9bd0" d="M731.1 387.9L745.6 384L748.6 371.7L734.1 375.7Z"/><path fill="#dadaee" d="M332.7 466.4L346.5 465.3L350.4 457.6L336.6 458.8Z"/><path fill="#d9d9ed" d="M346.5 465.3L360.3 464.2L364.1 456.3L350.4 457.6Z"/><path fill="#d8d8ed" d="M360.3 464.2L374.1 462.9L377.9 454.9L364.1 456.3Z"/><path fill="#d6d6ec" d="M374.1 462.9L387.9 461.6L391.7 453.3L377.9 454.9Z"/><path fill="#d5d5eb" d="M387.9 461.6L401.8 460.1L405.6 451.7L391.7 453.3Z"/><path fill="#d3d3ea" d="M401.8 460.1L415.7 458.6L419.4 450L405.6 451.7Z"/><path fill="#d2d2ea" d="M415.7 458.6L429.6 456.9L433.3 448.2L419.4 450Z"/><path fill="#d0d0e9" d="M429.6 456.9L443.6 455.2L447.2 446.2L433.3 448.2Z"/><path fill="#cecee8" d="M443.6 455.2L457.5 453.3L461.2 444.2L447.2 446.2Z"/><path fill="#cccce7" d="M457.5 453.3L471.5 451.4L475.1 442.1L461.2 444.2Z"/><path fill="#cacae6" d="M471.5 451.4L485.5 449.3L489.1 439.8L475.1 442.1Z"/><path fill="#c9c9e5" d="M485.5 449.3L499.6 447.2L503.1 437.5L489.1 439.8Z"/><path fill="#c7c7e5" d="M499.6 447.2L513.6 444.9L517.1 435.1L503.1 437.5Z"/><path fill="#c5c5e4" d="M513.6 444.9L527.7 442.6L531.2 432.6L517.1 435.1Z"/><path fill="#c2c2e3" d="M527.7 442.6L541.9 440.2L545.3 430L531.2 432.6Z"/><path fill="#c0c0e2" d="M541.9 440.2L556 437.6L559.4 427.2L545.3 430Z"/><path fill="#bebee1" d="M556 437.6L570.2 435L573.6 424.4L559.4 427.2Z"/><path fill="#bcbce0" d="M570.2 435L584.4 432.3L587.7 421.5L573.6 424.4Z"/><path fill="#babade" d="M584.4 432.3L598.6 429.5L601.9 418.6L587.7 421.5Z"/><path fill="#b7b7dd" d="M598.6 429.5L612.9 426.5L616.2 415.5L601.9 418.6Z"/><path fill="#b5b5dc" d="M612.9 426.5L627.2 423.5L630.4 412.3L616.2 415.5Z"/><path fill="#b2b2db" d="M627.2 423.5L641.5 420.5L644.7 409.1L630.4 412.3Z"/><path fill="#b0b0da" d="M641.5 420.5L655.8 417.3L659 405.7L644.7 409.1Z"/><path fill="#adadd9" d="M655.8 417.3L670.2 414L673.4 402.3L659 405.7Z"/><path fill="#ababd7" d="M670.2 414L684.6 410.7L687.8 398.8L673.4 402.3Z"/><path fill="#a8a8d6" d="M684.6 410.7L699.1 407.2L702.2 395.3L687.8 398.8Z"/><path fill="#a5a5d5" d="M699.1 407.2L713.5 403.7L716.6 391.6L702.2 395.3Z"/><path fill="#a3a3d4" d="M713.5 403.7L728 400.1L731.1 387.9L716.6 391.6Z"/><path fill="#a0a0d2" d="M728 400.1L742.6 396.4L745.6 384L731.1 387.9Z"/><path fill="#ddddef" d="M328.8 473.9L342.6 473.1L346.5 465.3L332.7 466.4Z"/><path fill="#dcdcee" d="M342.6 473.1L356.4 472.1L360.3 464.2L346.5 465.3Z"/><path fill="#dadaee" d="M356.4 472.1L370.3 471L374.1 462.9L360.3 464.2Z"/><path fill="#d9d9ed" d="M370.3 471L384.1 469.8L387.9 461.6L374.1 462.9Z"/><path fill="#d8d8ed" d="M384.1 469.8L398 468.6L401.8 460.1L387.9 461.6Z"/><path fill="#d6d6ec" d="M398 468.6L412 467.2L415.7 458.6L401.8 460.1Z"/><path fill="#d5d5eb" d="M412 467.2L425.9 465.7L429.6 456.9L415.7 458.6Z"/><path fill="#d3d3ea" d="M425.9 465.7L439.9 464.1L443.6 455.2L429.6 456.9Z"/><path fill="#d2d2ea" d="M439.9 464.1L453.9 462.5L457.5 453.3L443.6 455.2Z"/><path fill="#d0d0e9" d="M453.9 462.5L467.9 460.7L471.5 451.4L457.5 453.3Z"/><path fill="#cecee8" d="M467.9 460.7L481.9 458.8L485.5 449.3L471.5 451.4Z"/><path fill="#cccce7" d="M481.9 458.8L496 456.9L499.6 447.2L485.5 449.3Z"/><path fill="#cacae6" d="M496 456.9L510.1 454.8L513.6 444.9L499.6 447.2Z"/><path fill="#c8c8e5" d="M510.1 454.8L524.2 452.6L527.7 442.6L513.6 444.9Z"/><path fill="#c6c6e4" d="M524.2 452.6L538.4 450.4L541.9 440.2L527.7 442.6Z"/><path fill="#c4c4e4" d="M538.4 450.4L552.6 448L556 437.6L541.9 440.2Z"/><path fill="#c2c2e3" d="M552.6 448L566.8 445.6L570.2 435L556 437.6Z"/><path fill="#c0c0e2" d="M566.8 445.6L581 443L584.4 432.3L570.2 435Z"/><path fill="#bebee0" d="M581 443L595.3 440.4L598.6 429.5L584.4 432.3Z"/><path fill="#bcbcdf" d="M595.3 440.4L609.6 437.6L612.9 426.5L598.6 429.5Z"/><path fill="#b9b9de" d="M609.6 437.6L623.9 434.8L627.2 423.5L612.9 426.5Z"/><path fill="#b7b7dd" d="M623.9 434.8L638.3 431.9L641.5 420.5L627.2 423.5Z"/><path fill="#b5b5dc" d="M638.3 431.9L652.6 428.8L655.8 417.3L641.5 420.5Z"/><path fill="#b2b2db" d="M652.6 428.8L667 425.7L670.2 414L655.8 417.3Z"/><path fill="#b0b0da" d="M667 425.7L681.5 422.5L684.6 410.7L670.2 414Z"/><path fill="#adadd9" d="M681.5 422.5L696 419.2L699.1 407.2L684.6 410.7Z"/><path fill="#aaaad7" d="M696 419.2L710.5 415.8L713.5 403.7L699.1 407.2Z"/><path fill="#a8a8d6" d="M710.5 415.8L725 412.4L728 400.1L713.5 403.7Z"/><path fill="#a5a5d5" d="M725 412.4L739.5 408.8L742.6 396.4L728 400.1Z"/><path fill="#e0e0f0" d="M324.9 481.5L338.7 480.8L342.6 473.1L328.8 473.9Z"/><path fill="#dedef0" d="M338.7 480.8L352.6 480L356.4 472.1L342.6 473.1Z"/><path fill="#ddddef" d="M352.6 480L366.4 479.1L370.3 471L356.4 472.1Z"/><path fill="#dcdcef" d="M366.4 479.1L380.3 478.1L384.1 469.8L370.3 471Z"/><path fill="#dbdbee" d="M380.3 478.1L394.3 477L398 468.6L384.1 469.8Z"/><path fill="#d9d9ed" d="M394.3 477L408.2 475.8L412 467.2L398 468.6Z"/><path fill="#d8d8ed" d="M408.2 475.8L422.2 474.5L425.9 465.7L412 467.2Z"/><path fill="#d6d6ec" d="M422.2 474.5L436.2 473.1L439.9 464.1L425.9 465.7Z"/><path fill="#d5d5eb" d="M436.2 473.1L450.2 471.6L453.9 462.5L439.9 464.1Z"/><path fill="#d3d3ea" d="M450.2 471.6L464.3 470L467.9 460.7L453.9 462.5Z"/><path fill="#d2d2ea" d="M464.3 470L478.4 468.3L481.9 458.8L467.9 460.7Z"/><path fill="#d0d0e9" d="M478.4 468.3L492.5 466.6L496 456.9L481.9 458.8Z"/><path fill="#cecee8" d="M492.5 466.6L506.6 464.7L510.1 454.8L496 456.9Z"/><path fill="#cccce7" d="M506.6 464.7L520.8 462.7L524.2 452.6L510.1 454.8Z"/><path fill="#cacae6" d="M520.8 462.7L534.9 460.6L538.4 450.4L524.2 452.6Z"/><path fill="#c8c8e5" d="M534.9 460.6L549.1 458.4L552.6 448L538.4 450.4Z"/><path fill="#c6c6e4" d="M549.1 458.4L563.4 456.2L566.8 445.6L552.6 448Z"/><path fill="#c4c4e4" d="M563.4 456.2L577.7 453.8L581 443L566.8 445.6Z"/><path fill="#c2c2e3" d="M577.7 453.8L591.9 451.3L595.3 440.4L581 443Z"/><path fill="#c0c0e2" d="M591.9 451.3L606.3 448.7L609.6 437.6L595.3 440.4Z"/><path fill="#bebee0" d="M606.3 448.7L620.6 446.1L623.9 434.8L609.6 437.6Z"/><path fill="#bcbcdf" d="M620.6 446.1L635 443.3L638.3 431.9L623.9 434.8Z"/><path fill="#b9b9de" d="M635 443.3L649.4 440.4L652.6 428.8L638.3 431.9Z"/><path fill="#b7b7dd" d="M649.4 440.4L663.8 437.5L667 425.7L652.6 428.8Z"/><path fill="#b5b5dc" d="M663.8 437.5L678.3 434.4L681.5 422.5L667 425.7Z"/><path fill="#b2b2db" d="M678.3 434.4L692.8 431.3L696 419.2L681.5 422.5Z"/><path fill="#b0b0da" d="M692.8 431.3L707.3 428L710.5 415.8L696 419.2Z"/><path fill="#adadd9" d="M707.3 428L721.9 424.7L725 412.4L710.5 415.8Z"/><path fill="#aaaad7" d="M721.9 424.7L736.5 421.3L739.5 408.8L725 412.4Z"/><path fill="#e2e2f1" d="M321 489L334.8 488.5L338.7 480.8L324.9 481.5Z"/><path fill="#e1e1f1" d="M334.8 488.5L348.7 487.9L352.6 480L338.7 480.8Z"/><path fill="#e0e0f0" d="M348.7 487.9L362.6 487.1L366.4 479.1L352.6 480Z"/><path fill="#dfdff0" d="M362.6 487.1L376.6 486.3L380.3 478.1L366.4 479.1Z"/><path fill="#dedeef" d="M376.6 486.3L390.5 485.4L394.3 477L380.3 478.1Z"/><path fill="#dcdcef" d="M390.5 485.4L404.5 484.4L408.2 475.8L394.3 477Z"/><path fill="#dbdbee" d="M404.5 484.4L418.5 483.3L422.2 474.5L408.2 475.8Z"/><path fill="#dadaed" d="M418.5 483.3L432.5 482.1L436.2 473.1L422.2 474.5Z"/><path fill="#d8d8ed" d="M432.5 482.1L446.6 480.8L450.2 471.6L436.2 473.1Z"/><path fill="#d7d7ec" d="M446.6 480.8L460.7 479.4L464.3 470L450.2 471.6Z"/><path fill="#d5d5eb" d="M460.7 479.4L474.8 477.9L478.4 468.3L464.3 470Z"/><path fill="#d4d4eb" d="M474.8 477.9L488.9 476.3L492.5 466.6L478.4 468.3Z"/><path fill="#d2d2ea" d="M488.9 476.3L503.1 474.6L506.6 464.7L492.5 466.6Z"/><path fill="#d0d0e9" d="M503.1 474.6L517.3 472.8L520.8 462.7L506.6 464.7Z"/><path fill="#cecee8" d="M517.3 472.8L531.5 470.9L534.9 460.6L520.8 462.7Z"/><path fill="#cdcde7" d="M531.5 470.9L545.7 468.9L549.1 458.4L534.9 460.6Z"/><path fill="#cbcbe6" d="M545.7 468.9L560 466.8L563.4 456.2L549.1 458.4Z"/><path fill="#c9c9e6" d="M560 466.8L574.3 464.6L577.7 453.8L563.4 456.2Z"/><path fill="#c7c7e5" d="M574.3 464.6L588.6 462.3L591.9 451.3L577.7 453.8Z"/><path fill="#c5c5e4" d="M588.6 462.3L602.9 459.9L606.3 448.7L591.9 451.3Z"/><path fill="#c3c3e3" d="M602.9 459.9L617.3 457.4L620.6 446.1L606.3 448.7Z"/><path fill="#c0c0e2" d="M617.3 457.4L631.7 454.8L635 443.3L620.6 446.1Z"/><path fill="#bebee1" d="M631.7 454.8L646.2 452.1L649.4 440.4L635 443.3Z"/><path fill="#bcbcdf" d="M646.2 452.1L660.6 449.3L663.8 437.5L649.4 440.4Z"/><path fill="#b9b9de" d="M660.6 449.3L675.1 446.4L678.3 434.4L663.8 437.5Z"/><path fill="#b7b7dd" d="M675.1 446.4L689.7 443.4L692.8 431.3L678.3 434.4Z"/><path fill="#b5b5dc" d="M689.7 443.4L704.2 440.3L707.3 428L692.8 431.3Z"/><path fill="#b2b2db" d="M704.2 440.3L718.8 437.1L721.9 424.7L707.3 428Z"/><path fill="#b0b0da" d="M718.8 437.1L733.4 433.8L736.5 421.3L721.9 424.7Z"/><path fill="#e5e5f3" d="M317 496.6L330.9 496.2L334.8 488.5L321 489Z"/><path fill="#e4e4f2" d="M330.9 496.2L344.9 495.8L348.7 487.9L334.8 488.5Z"/><path fill="#e3e3f2" d="M344.9 495.8L358.8 495.2L362.6 487.1L348.7 487.9Z"/><path fill="#e2e2f1" d="M358.8 495.2L372.8 494.6L376.6 486.3L362.6 487.1Z"/><path fill="#e0e0f1" d="M372.8 494.6L386.8 493.8L390.5 485.4L376.6 486.3Z"/><path fill="#dfdff0" d="M386.8 493.8L400.8 493L404.5 484.4L390.5 485.4Z"/><path fill="#dedef0" d="M400.8 493L414.8 492.1L418.5 483.3L404.5 484.4Z"/><path fill="#ddddef" d="M414.8 492.1L428.9 491L432.5 482.1L418.5 483.3Z"/><path fill="#dbdbee" d="M428.9 491L442.9 489.9L446.6 480.8L432.5 482.1Z"/><path fill="#dadaee" d="M442.9 489.9L457.1 488.7L460.7 479.4L446.6 480.8Z"/><path fill="#d9d9ed" d="M457.1 488.7L471.2 487.4L474.8 477.9L460.7 479.4Z"/><path fill="#d7d7ec" d="M471.2 487.4L485.4 486L488.9 476.3L474.8 477.9Z"/><path fill="#d6d6ec" d="M485.4 486L499.5 484.4L503.1 474.6L488.9 476.3Z"/><path fill="#d4d4eb" d="M499.5 484.4L513.8 482.8L517.3 472.8L503.1 474.6Z"/><path fill="#d2d2ea" d="M513.8 482.8L528 481.1L531.5 470.9L517.3 472.8Z"/><path fill="#d1d1e9" d="M528 481.1L542.3 479.3L545.7 468.9L531.5 470.9Z"/><path fill="#cfcfe8" d="M542.3 479.3L556.6 477.4L560 466.8L545.7 468.9Z"/><path fill="#cdcde8" d="M556.6 477.4L570.9 475.4L574.3 464.6L560 466.8Z"/><path fill="#cbcbe7" d="M570.9 475.4L585.2 473.3L588.6 462.3L574.3 464.6Z"/><path fill="#c9c9e6" d="M585.2 473.3L599.6 471L602.9 459.9L588.6 462.3Z"/><path fill="#c7c7e5" d="M599.6 471L614 468.7L617.3 457.4L602.9 459.9Z"/><path fill="#c5c5e4" d="M614 468.7L628.5 466.3L631.7 454.8L617.3 457.4Z"/><path fill="#c3c3e3" d="M628.5 466.3L642.9 463.7L646.2 452.1L631.7 454.8Z"/><path fill="#c1c1e2" d="M642.9 463.7L657.4 461.1L660.6 449.3L646.2 452.1Z"/><path fill="#bebee1" d="M657.4 461.1L672 458.4L675.1 446.4L660.6 449.3Z"/><path fill="#bcbce0" d="M672 458.4L686.5 455.5L689.7 443.4L675.1 446.4Z"/><path fill="#babade" d="M686.5 455.5L701.1 452.6L704.2 440.3L689.7 443.4Z"/><path fill="#b7b7dd" d="M701.1 452.6L715.7 449.5L718.8 437.1L704.2 440.3Z"/><path fill="#b5b5dc" d="M715.7 449.5L730.4 446.3L733.4 433.8L718.8 437.1Z"/><path fill="#e7e7f4" d="M313.1 504.1L327.1 503.9L330.9 496.2L317 496.6Z"/><path fill="#e6e6f3" d="M327.1 503.9L341 503.6L344.9 495.8L330.9 496.2Z"/><path fill="#e5e5f3" d="M341 503.6L355 503.3L358.8 495.2L344.9 495.8Z"/><path fill="#e4e4f2" d="M355 503.3L369 502.8L372.8 494.6L358.8 495.2Z"/><path fill="#e3e3f2" d="M369 502.8L383 502.2L386.8 493.8L372.8 494.6Z"/><path fill="#e2e2f2" d="M383 502.2L397 501.6L400.8 493L386.8 493.8Z"/><path fill="#e1e1f1" d="M397 501.6L411.1 500.8L414.8 492.1L400.8 493Z"/><path fill="#e0e0f0" d="M411.1 500.8L425.2 500L428.9 491L414.8 492.1Z"/><path fill="#dfdff0" d="M425.2 500L439.3 499.1L442.9 489.9L428.9 491Z"/><path fill="#ddddef" d="M439.3 499.1L453.4 498L457.1 488.7L442.9 489.9Z"/><path fill="#dcdcef" d="M453.4 498L467.6 496.9L471.2 487.4L457.1 488.7Z"/><path fill="#dbdbee" d="M467.6 496.9L481.8 495.7L485.4 486L471.2 487.4Z"/><path fill="#d9d9ed" d="M481.8 495.7L496 494.4L499.5 484.4L485.4 486Z"/><path fill="#d8d8ed" d="M496 494.4L510.3 492.9L513.8 482.8L499.5 484.4Z"/><path fill="#d6d6ec" d="M510.3 492.9L524.5 491.4L528 481.1L513.8 482.8Z"/><path fill="#d5d5eb" d="M524.5 491.4L538.8 489.8L542.3 479.3L528 481.1Z"/><path fill="#d3d3ea" d="M538.8 489.8L553.1 488L556.6 477.4L542.3 479.3Z"/><path fill="#d1d1e9" d="M553.1 488L567.5 486.2L570.9 475.4L556.6 477.4Z"/><path fill="#cfcfe9" d="M567.5 486.2L581.9 484.3L585.2 473.3L570.9 475.4Z"/><path fill="#cdcde8" d="M581.9 484.3L596.3 482.2L599.6 471L585.2 473.3Z"/><path fill="#cccce7" d="M596.3 482.2L610.7 480.1L614 468.7L599.6 471Z"/><path fill="#cacae6" d="M610.7 480.1L625.2 477.8L628.5 466.3L614 468.7Z"/><path fill="#c8c8e5" d="M625.2 477.8L639.7 475.5L642.9 463.7L628.5 466.3Z"/><path fill="#c5c5e4" d="M639.7 475.5L654.2 473L657.4 461.1L642.9 463.7Z"/><path fill="#c3c3e3" d="M654.2 473L668.8 470.4L672 458.4L657.4 461.1Z"/><path fill="#c1c1e2" d="M668.8 470.4L683.4 467.7L686.5 455.5L672 458.4Z"/><path fill="#bfbfe1" d="M683.4 467.7L698 464.9L701.1 452.6L686.5 455.5Z"/><path fill="#bcbce0" d="M698 464.9L712.6 462L715.7 449.5L701.1 452.6Z"/><path fill="#babadf" d="M712.6 462L727.3 458.9L730.4 446.3L715.7 449.5Z"/><path fill="#e9e9f5" d="M309.2 511.7L323.2 511.6L327.1 503.9L313.1 504.1Z"/><path fill="#e9e9f5" d="M323.2 511.6L337.2 511.5L341 503.6L327.1 503.9Z"/><path fill="#e8e8f4" d="M337.2 511.5L351.2 511.3L355 503.3L341 503.6Z"/><path fill="#e7e7f4" d="M351.2 511.3L365.2 511L369 502.8L355 503.3Z"/><path fill="#e6e6f3" d="M365.2 511L379.2 510.7L383 502.2L369 502.8Z"/><path fill="#e5e5f3" d="M379.2 510.7L393.3 510.2L397 501.6L383 502.2Z"/><path fill="#e4e4f2" d="M393.3 510.2L407.4 509.6L411.1 500.8L397 501.6Z"/><path fill="#e3e3f2" d="M407.4 509.6L421.5 509L425.2 500L411.1 500.8Z"/><path fill="#e2e2f1" d="M421.5 509L435.6 508.2L439.3 499.1L425.2 500Z"/><path fill="#e1e1f1" d="M435.6 508.2L449.8 507.4L453.4 498L439.3 499.1Z"/><path fill="#e0e0f0" d="M449.8 507.4L464 506.4L467.6 496.9L453.4 498Z"/><path fill="#dedef0" d="M464 506.4L478.2 505.4L481.8 495.7L467.6 496.9Z"/><path fill="#ddddef" d="M478.2 505.4L492.5 504.3L496 494.4L481.8 495.7Z"/><path fill="#dcdcee" d="M492.5 504.3L506.7 503L510.3 492.9L496 494.4Z"/><path fill="#dadaee" d="M506.7 503L521 501.7L524.5 491.4L510.3 492.9Z"/><path fill="#d9d9ed" d="M521 501.7L535.4 500.3L538.8 489.8L524.5 491.4Z"/><path fill="#d7d7ec" d="M535.4 500.3L549.7 498.7L553.1 488L538.8 489.8Z"/><path fill="#d5d5eb" d="M549.7 498.7L564.1 497.1L567.5 486.2L553.1 488Z"/><path fill="#d4d4eb" d="M564.1 497.1L578.5 495.3L581.9 484.3L567.5 486.2Z"/><path fill="#d2d2ea" d="M578.5 495.3L592.9 493.5L596.3 482.2L581.9 484.3Z"/><path fill="#d0d0e9" d="M592.9 493.5L607.4 491.5L610.7 480.1L596.3 482.2Z"/><path fill="#cecee8" d="M607.4 491.5L621.9 489.4L625.2 477.8L610.7 480.1Z"/><path fill="#cccce7" d="M621.9 489.4L636.4 487.2L639.7 475.5L625.2 477.8Z"/><path fill="#cacae6" d="M636.4 487.2L651 484.9L654.2 473L639.7 475.5Z"/><path fill="#c8c8e5" d="M651 484.9L665.6 482.5L668.8 470.4L654.2 473Z"/><path fill="#c6c6e4" d="M665.6 482.5L680.2 479.9L683.4 467.7L668.8 470.4Z"/><path fill="#c4c4e3" d="M680.2 479.9L694.8 477.3L698 464.9L683.4 467.7Z"/><path fill="#c2c2e2" d="M694.8 477.3L709.5 474.5L712.6 462L698 464.9Z"/><path fill="#bfbfe1" d="M709.5 474.5L724.2 471.6L727.3 458.9L712.6 462Z"/><path fill="#ececf6" d="M305.3 519.2L319.3 519.3L323.2 511.6L309.2 511.7Z"/><path fill="#ebebf6" d="M319.3 519.3L333.3 519.4L337.2 511.5L323.2 511.6Z"/><path fill="#ebebf5" d="M333.3 519.4L347.3 519.4L351.2 511.3L337.2 511.5Z"/><path fill="#eaeaf5" d="M347.3 519.4L361.4 519.3L365.2 511L351.2 511.3Z"/><path fill="#e9e9f5" d="M361.4 519.3L375.5 519.1L379.2 510.7L365.2 511Z"/><path fill="#e8e8f4" d="M375.5 519.1L389.6 518.8L393.3 510.2L379.2 510.7Z"/><path fill="#e7e7f4" d="M389.6 518.8L403.7 518.4L407.4 509.6L393.3 510.2Z"/><path fill="#e6e6f3" d="M403.7 518.4L417.8 517.9L421.5 509L407.4 509.6Z"/><path fill="#e5e5f3" d="M417.8 517.9L432 517.4L435.6 508.2L421.5 509Z"/><path fill="#e4e4f2" d="M432 517.4L446.2 516.7L449.8 507.4L435.6 508.2Z"/><path fill="#e3e3f2" d="M446.2 516.7L460.4 516L464 506.4L449.8 507.4Z"/><path fill="#e2e2f1" d="M460.4 516L474.7 515.2L478.2 505.4L464 506.4Z"/><path fill="#e1e1f1" d="M474.7 515.2L488.9 514.2L492.5 504.3L478.2 505.4Z"/><path fill="#dfdff0" d="M488.9 514.2L503.2 513.2L506.7 503L492.5 504.3Z"/><path fill="#dedef0" d="M503.2 513.2L517.6 512L521 501.7L506.7 503Z"/><path fill="#ddddef" d="M517.6 512L531.9 510.8L535.4 500.3L521 501.7Z"/><path fill="#dbdbee" d="M531.9 510.8L546.3 509.4L549.7 498.7L535.4 500.3Z"/><path fill="#dadaed" d="M546.3 509.4L560.7 508L564.1 497.1L549.7 498.7Z"/><path fill="#d8d8ed" d="M560.7 508L575.1 506.4L578.5 495.3L564.1 497.1Z"/><path fill="#d6d6ec" d="M575.1 506.4L589.6 504.7L592.9 493.5L578.5 495.3Z"/><path fill="#d5d5eb" d="M589.6 504.7L604.1 502.9L607.4 491.5L592.9 493.5Z"/><path fill="#d3d3ea" d="M604.1 502.9L618.6 501L621.9 489.4L607.4 491.5Z"/><path fill="#d1d1e9" d="M618.6 501L633.2 499L636.4 487.2L621.9 489.4Z"/><path fill="#cfcfe8" d="M633.2 499L647.7 496.8L651 484.9L636.4 487.2Z"/><path fill="#cdcde8" d="M647.7 496.8L662.3 494.6L665.6 482.5L651 484.9Z"/><path fill="#cbcbe7" d="M662.3 494.6L677 492.2L680.2 479.9L665.6 482.5Z"/><path fill="#c9c9e6" d="M677 492.2L691.7 489.7L694.8 477.3L680.2 479.9Z"/><path fill="#c7c7e5" d="M691.7 489.7L706.4 487.1L709.5 474.5L694.8 477.3Z"/><path fill="#c4c4e4" d="M706.4 487.1L721.1 484.3L724.2 471.6L709.5 474.5Z"/><path fill="#eeeef7" d="M301.4 526.7L315.5 527L319.3 519.3L305.3 519.2Z"/><path fill="#eeeef7" d="M315.5 527L329.5 527.2L333.3 519.4L319.3 519.3Z"/><path fill="#ededf7" d="M329.5 527.2L343.5 527.4L347.3 519.4L333.3 519.4Z"/><path fill="#ededf6" d="M343.5 527.4L357.6 527.5L361.4 519.3L347.3 519.4Z"/><path fill="#ececf6" d="M357.6 527.5L371.7 527.5L375.5 519.1L361.4 519.3Z"/><path fill="#ebebf6" d="M371.7 527.5L385.8 527.4L389.6 518.8L375.5 519.1Z"/><path fill="#eaeaf5" d="M385.8 527.4L400 527.2L403.7 518.4L389.6 518.8Z"/><path fill="#e9e9f5" d="M400 527.2L414.1 526.9L417.8 517.9L403.7 518.4Z"/><path fill="#e9e9f4" d="M414.1 526.9L428.3 526.6L432 517.4L417.8 517.9Z"/><path fill="#e8e8f4" d="M428.3 526.6L442.6 526.1L446.2 516.7L432 517.4Z"/><path fill="#e7e7f4" d="M442.6 526.1L456.8 525.6L460.4 516L446.2 516.7Z"/><path fill="#e5e5f3" d="M456.8 525.6L471.1 524.9L474.7 515.2L460.4 516Z"/><path fill="#e4e4f2" d="M471.1 524.9L485.4 524.2L488.9 514.2L474.7 515.2Z"/><path fill="#e3e3f2" d="M485.4 524.2L499.7 523.3L503.2 513.2L488.9 514.2Z"/><path fill="#e2e2f1" d="M499.7 523.3L514.1 522.4L517.6 512L503.2 513.2Z"/><path fill="#e1e1f1" d="M514.1 522.4L528.4 521.3L531.9 510.8L517.6 512Z"/><path fill="#dfdff0" d="M528.4 521.3L542.8 520.1L546.3 509.4L531.9 510.8Z"/><path fill="#dedeef" d="M542.8 520.1L557.3 518.9L560.7 508L546.3 509.4Z"/><path fill="#dcdcef" d="M557.3 518.9L571.7 517.5L575.1 506.4L560.7 508Z"/><path fill="#dbdbee" d="M571.7 517.5L586.2 516L589.6 504.7L575.1 506.4Z"/><path fill="#d9d9ed" d="M586.2 516L600.7 514.4L604.1 502.9L589.6 504.7Z"/><path fill="#d7d7ec" d="M600.7 514.4L615.3 512.6L618.6 501L604.1 502.9Z"/><path fill="#d6d6ec" d="M615.3 512.6L629.9 510.8L633.2 499L618.6 501Z"/><path fill="#d4d4eb" d="M629.9 510.8L644.5 508.8L647.7 496.8L633.2 499Z"/><path fill="#d2d2ea" d="M644.5 508.8L659.1 506.7L662.3 494.6L647.7 496.8Z"/><path fill="#d0d0e9" d="M659.1 506.7L673.8 504.5L677 492.2L662.3 494.6Z"/><path fill="#cecee8" d="M673.8 504.5L688.5 502.2L691.7 489.7L677 492.2Z"/><path fill="#cccce7" d="M688.5 502.2L703.2 499.7L706.4 487.1L691.7 489.7Z"/><path fill="#cacae6" d="M703.2 499.7L718 497.1L721.1 484.3L706.4 487.1Z"/><path fill="#f1f1f8" d="M297.6 534.2L311.6 534.7L315.5 527L301.4 526.7Z"/><path fill="#f0f0f8" d="M311.6 534.7L325.6 535.1L329.5 527.2L315.5 527Z"/><path fill="#f0f0f8" d="M325.6 535.1L339.7 535.4L343.5 527.4L329.5 527.2Z"/><path fill="#efeff8" d="M339.7 535.4L353.8 535.7L357.6 527.5L343.5 527.4Z"/><path fill="#efeff7" d="M353.8 535.7L367.9 535.9L371.7 527.5L357.6 527.5Z"/><path fill="#eeeef7" d="M367.9 535.9L382.1 536L385.8 527.4L371.7 527.5Z"/><path fill="#ededf7" d="M382.1 536L396.3 536L400 527.2L385.8 527.4Z"/><path fill="#ededf6" d="M396.3 536L410.5 535.9L414.1 526.9L400 527.2Z"/><path fill="#ececf6" d="M410.5 535.9L424.7 535.7L428.3 526.6L414.1 526.9Z"/><path fill="#ebebf6" d="M424.7 535.7L438.9 535.5L442.6 526.1L428.3 526.6Z"/><path fill="#eaeaf5" d="M438.9 535.5L453.2 535.1L456.8 525.6L442.6 526.1Z"/><path fill="#e9e9f5" d="M453.2 535.1L467.5 534.7L471.1 524.9L456.8 525.6Z"/><path fill="#e8e8f4" d="M467.5 534.7L481.8 534.1L485.4 524.2L471.1 524.9Z"/><path fill="#e7e7f4" d="M481.8 534.1L496.2 533.5L499.7 523.3L485.4 524.2Z"/><path fill="#e6e6f3" d="M496.2 533.5L510.6 532.7L514.1 522.4L499.7 523.3Z"/><path fill="#e5e5f3" d="M510.6 532.7L525 531.8L528.4 521.3L514.1 522.4Z"/><path fill="#e3e3f2" d="M525 531.8L539.4 530.9L542.8 520.1L528.4 521.3Z"/><path fill="#e2e2f1" d="M539.4 530.9L553.9 529.8L557.3 518.9L542.8 520.1Z"/><path fill="#e1e1f1" d="M553.9 529.8L568.3 528.6L571.7 517.5L557.3 518.9Z"/><path fill="#dfdff0" d="M568.3 528.6L582.9 527.3L586.2 516L571.7 517.5Z"/><path fill="#dedeef" d="M582.9 527.3L597.4 525.8L600.7 514.4L586.2 516Z"/><path fill="#dcdcef" d="M597.4 525.8L612 524.3L615.3 512.6L600.7 514.4Z"/><path fill="#dadaee" d="M612 524.3L626.6 522.6L629.9 510.8L615.3 512.6Z"/><path fill="#d9d9ed" d="M626.6 522.6L641.2 520.8L644.5 508.8L629.9 510.8Z"/><path fill="#d7d7ec" d="M641.2 520.8L655.9 518.9L659.1 506.7L644.5 508.8Z"/><path fill="#d5d5eb" d="M655.9 518.9L670.6 516.9L673.8 504.5L659.1 506.7Z"/><path fill="#d3d3ea" d="M670.6 516.9L685.3 514.7L688.5 502.2L673.8 504.5Z"/><path fill="#d1d1e9" d="M685.3 514.7L700.1 512.4L703.2 499.7L688.5 502.2Z"/><path fill="#cfcfe8" d="M700.1 512.4L714.8 509.9L718 497.1L703.2 499.7Z"/><path fill="#f3f3f9" d="M293.7 541.7L307.7 542.3L311.6 534.7L297.6 534.2Z"/><path fill="#f3f3f9" d="M307.7 542.3L321.8 542.9L325.6 535.1L311.6 534.7Z"/><path fill="#f2f2f9" d="M321.8 542.9L335.9 543.5L339.7 535.4L325.6 535.1Z"/><path fill="#f2f2f9" d="M335.9 543.5L350 543.9L353.8 535.7L339.7 535.4Z"/><path fill="#f1f1f9" d="M350 543.9L364.2 544.3L367.9 535.9L353.8 535.7Z"/><path fill="#f1f1f8" d="M364.2 544.3L378.4 544.6L382.1 536L367.9 535.9Z"/><path fill="#f0f0f8" d="M378.4 544.6L392.6 544.8L396.3 536L382.1 536Z"/><path fill="#f0f0f8" d="M392.6 544.8L406.8 544.9L410.5 535.9L396.3 536Z"/><path fill="#efeff7" d="M406.8 544.9L421 544.9L424.7 535.7L410.5 535.9Z"/><path fill="#eeeef7" d="M421 544.9L435.3 544.8L438.9 535.5L424.7 535.7Z"/><path fill="#ededf7" d="M435.3 544.8L449.6 544.7L453.2 535.1L438.9 535.5Z"/><path fill="#ededf6" d="M449.6 544.7L463.9 544.4L467.5 534.7L453.2 535.1Z"/><path fill="#ececf6" d="M463.9 544.4L478.3 544.1L481.8 534.1L467.5 534.7Z"/><path fill="#ebebf5" d="M478.3 544.1L492.7 543.6L496.2 533.5L481.8 534.1Z"/><path fill="#eaeaf5" d="M492.7 543.6L507.1 543.1L510.6 532.7L496.2 533.5Z"/><path fill="#e9e9f4" d="M507.1 543.1L521.5 542.4L525 531.8L510.6 532.7Z"/><path fill="#e7e7f4" d="M521.5 542.4L535.9 541.6L539.4 530.9L525 531.8Z"/><path fill="#e6e6f3" d="M535.9 541.6L550.4 540.7L553.9 529.8L539.4 530.9Z"/><path fill="#e5e5f3" d="M550.4 540.7L564.9 539.7L568.3 528.6L553.9 529.8Z"/><path fill="#e3e3f2" d="M564.9 539.7L579.5 538.6L582.9 527.3L568.3 528.6Z"/><path fill="#e2e2f1" d="M579.5 538.6L594.1 537.4L597.4 525.8L582.9 527.3Z"/><path fill="#e1e1f1" d="M594.1 537.4L608.7 536L612 524.3L597.4 525.8Z"/><path fill="#dfdff0" d="M608.7 536L623.3 534.5L626.6 522.6L612 524.3Z"/><path fill="#ddddef" d="M623.3 534.5L637.9 532.9L641.2 520.8L626.6 522.6Z"/><path fill="#dcdcee" d="M637.9 532.9L652.6 531.1L655.9 518.9L641.2 520.8Z"/><path fill="#dadaee" d="M652.6 531.1L667.3 529.3L670.6 516.9L655.9 518.9Z"/><path fill="#d8d8ed" d="M667.3 529.3L682.1 527.2L685.3 514.7L670.6 516.9Z"/><path fill="#d6d6ec" d="M682.1 527.2L696.9 525.1L700.1 512.4L685.3 514.7Z"/><path fill="#d4d4eb" d="M696.9 525.1L711.7 522.8L714.8 509.9L700.1 512.4Z"/><path fill="#f6f6fb" d="M289.8 549.1L303.9 550L307.7 542.3L293.7 541.7Z"/><path fill="#f5f5fa" d="M303.9 550L318 550.8L321.8 542.9L307.7 542.3Z"/><path fill="#f5f5fa" d="M318 550.8L332.1 551.5L335.9 543.5L321.8 542.9Z"/><path fill="#f5f5fa" d="M332.1 551.5L346.3 552.1L350 543.9L335.9 543.5Z"/><path fill="#f4f4fa" d="M346.3 552.1L360.4 552.7L364.2 544.3L350 543.9Z"/><path fill="#f4f4fa" d="M360.4 552.7L374.6 553.2L378.4 544.6L364.2 544.3Z"/><path fill="#f3f3fa" d="M374.6 553.2L388.9 553.6L392.6 544.8L378.4 544.6Z"/><path fill="#f3f3f9" d="M388.9 553.6L403.1 553.9L406.8 544.9L392.6 544.8Z"/><path fill="#f2f2f9" d="M403.1 553.9L417.4 554.1L421 544.9L406.8 544.9Z"/><path fill="#f2f2f9" d="M417.4 554.1L431.7 554.2L435.3 544.8L421 544.9Z"/><path fill="#f1f1f8" d="M431.7 554.2L446 554.3L449.6 544.7L435.3 544.8Z"/><path fill="#f0f0f8" d="M446 554.3L460.3 554.2L463.9 544.4L449.6 544.7Z"/><path fill="#efeff8" d="M460.3 554.2L474.7 554.1L478.3 544.1L463.9 544.4Z"/><path fill="#eeeef7" d="M474.7 554.1L489.1 553.8L492.7 543.6L478.3 544.1Z"/><path fill="#ededf7" d="M489.1 553.8L503.5 553.4L507.1 543.1L492.7 543.6Z"/><path fill="#ececf6" d="M503.5 553.4L518 553L521.5 542.4L507.1 543.1Z"/><path fill="#ebebf6" d="M518 553L532.5 552.4L535.9 541.6L521.5 542.4Z"/><path fill="#eaeaf5" d="M532.5 552.4L547 551.7L550.4 540.7L535.9 541.6Z"/><path fill="#e9e9f5" d="M547 551.7L561.5 550.9L564.9 539.7L550.4 540.7Z"/><path fill="#e8e8f4" d="M561.5 550.9L576.1 550L579.5 538.6L564.9 539.7Z"/><path fill="#e7e7f4" d="M576.1 550L590.7 548.9L594.1 537.4L579.5 538.6Z"/><path fill="#e5e5f3" d="M590.7 548.9L605.3 547.7L608.7 536L594.1 537.4Z"/><path fill="#e4e4f2" d="M605.3 547.7L620 546.4L623.3 534.5L608.7 536Z"/><path fill="#e2e2f1" d="M620 546.4L634.7 545L637.9 532.9L623.3 534.5Z"/><path fill="#e0e0f1" d="M634.7 545L649.4 543.4L652.6 531.1L637.9 532.9Z"/><path fill="#dfdff0" d="M649.4 543.4L664.1 541.7L667.3 529.3L652.6 531.1Z"/><path fill="#ddddef" d="M664.1 541.7L678.9 539.8L682.1 527.2L667.3 529.3Z"/><path fill="#dbdbee" d="M678.9 539.8L693.7 537.8L696.9 525.1L682.1 527.2Z"/><path fill="#d9d9ed" d="M693.7 537.8L708.5 535.7L711.7 522.8L696.9 525.1Z"/><path fill="#f8f8fc" d="M285.9 556.6L300 557.6L303.9 550L289.8 549.1Z"/><path fill="#f8f8fc" d="M300 557.6L314.2 558.6L318 550.8L303.9 550Z"/><path fill="#f8f8fb" d="M314.2 558.6L328.3 559.5L332.1 551.5L318 550.8Z"/><path fill="#f7f7fb" d="M328.3 559.5L342.5 560.3L346.3 552.1L332.1 551.5Z"/><path fill="#f7f7fb" d="M342.5 560.3L356.7 561.1L360.4 552.7L346.3 552.1Z"/><path fill="#f7f7fb" d="M356.7 561.1L370.9 561.7L374.6 553.2L360.4 552.7Z"/><path fill="#f6f6fb" d="M370.9 561.7L385.2 562.3L388.9 553.6L374.6 553.2Z"/><path fill="#f6f6fb" d="M385.2 562.3L399.4 562.8L403.1 553.9L388.9 553.6Z"/><path fill="#f5f5fa" d="M399.4 562.8L413.7 563.3L417.4 554.1L403.1 553.9Z"/><path fill="#f5f5fa" d="M413.7 563.3L428 563.6L431.7 554.2L417.4 554.1Z"/><path fill="#f4f4fa" d="M428 563.6L442.4 563.9L446 554.3L431.7 554.2Z"/><path fill="#f4f4fa" d="M442.4 563.9L456.8 564L460.3 554.2L446 554.3Z"/><path fill="#f3f3f9" d="M456.8 564L471.2 564.1L474.7 554.1L460.3 554.2Z"/><path fill="#f2f2f9" d="M471.2 564.1L485.6 564L489.1 553.8L474.7 554.1Z"/><path fill="#f1f1f9" d="M485.6 564L500 563.8L503.5 553.4L489.1 553.8Z"/><path fill="#f0f0f8" d="M500 563.8L514.5 563.6L518 553L503.5 553.4Z"/><path fill="#efeff8" d="M514.5 563.6L529 563.2L532.5 552.4L518 553Z"/><path fill="#eeeef7" d="M529 563.2L543.6 562.7L547 551.7L532.5 552.4Z"/><path fill="#ededf7" d="M543.6 562.7L558.1 562.1L561.5 550.9L547 551.7Z"/><path fill="#ececf6" d="M558.1 562.1L572.7 561.4L576.1 550L561.5 550.9Z"/><path fill="#ebebf6" d="M572.7 561.4L587.3 560.5L590.7 548.9L576.1 550Z"/><path fill="#eaeaf5" d="M587.3 560.5L602 559.5L605.3 547.7L590.7 548.9Z"/><path fill="#e8e8f4" d="M602 559.5L616.6 558.4L620 546.4L605.3 547.7Z"/><path fill="#e7e7f4" d="M616.6 558.4L631.4 557.1L634.7 545L620 546.4Z"/><path fill="#e5e5f3" d="M631.4 557.1L646.1 555.7L649.4 543.4L634.7 545Z"/><path fill="#e4e4f2" d="M646.1 555.7L660.9 554.2L664.1 541.7L649.4 543.4Z"/><path fill="#e2e2f1" d="M660.9 554.2L675.7 552.5L678.9 539.8L664.1 541.7Z"/><path fill="#e0e0f1" d="M675.7 552.5L690.5 550.7L693.7 537.8L678.9 539.8Z"/><path fill="#dedef0" d="M690.5 550.7L705.4 548.7L708.5 535.7L693.7 537.8Z"/><path fill="#fafafd" d="M282.1 564L296.3 565.1L300 557.6L285.9 556.6Z"/><path fill="#fafafd" d="M296.3 565.1L310.5 566.2L314.2 558.6L300 557.6Z"/><path fill="#fafafd" d="M310.5 566.2L324.7 567.2L328.3 559.5L314.2 558.6Z"/><path fill="#fafafd" d="M324.7 567.2L338.9 568.1L342.5 560.3L328.3 559.5Z"/><path fill="#fafafc" d="M338.9 568.1L353.2 568.9L356.7 561.1L342.5 560.3Z"/><path fill="#f9f9fc" d="M353.2 568.9L367.5 569.7L370.9 561.7L356.7 561.1Z"/><path fill="#f9f9fc" d="M367.5 569.7L381.8 570.4L385.2 562.3L370.9 561.7Z"/><path fill="#f9f9fc" d="M381.8 570.4L396.1 571L399.4 562.8L385.2 562.3Z"/><path fill="#f8f8fc" d="M396.1 571L410.4 571.5L413.7 563.3L399.4 562.8Z"/><path fill="#f8f8fc" d="M410.4 571.5L424.8 571.9L428 563.6L413.7 563.3Z"/><path fill="#f7f7fb" d="M424.8 571.9L439.2 572.2L442.4 563.9L428 563.6Z"/><path fill="#f7f7fb" d="M439.2 572.2L453.7 572.5L456.8 564L442.4 563.9Z"/><path fill="#f6f6fb" d="M453.7 572.5L468.1 572.6L471.2 564.1L456.8 564Z"/><path fill="#f6f6fb" d="M468.1 572.6L482.6 572.6L485.6 564L471.2 564.1Z"/><path fill="#f5f5fa" d="M482.6 572.6L497.1 572.5L500 563.8L485.6 564Z"/><path fill="#f4f4fa" d="M497.1 572.5L511.6 572.3L514.5 563.6L500 563.8Z"/><path fill="#f3f3f9" d="M511.6 572.3L526.2 572L529 563.2L514.5 563.6Z"/><path fill="#f2f2f9" d="M526.2 572L540.8 571.6L543.6 562.7L529 563.2Z"/><path fill="#f1f1f8" d="M540.8 571.6L555.4 571L558.1 562.1L543.6 562.7Z"/><path fill="#f0f0f8" d="M555.4 571L570 570.3L572.7 561.4L558.1 562.1Z"/><path fill="#efeff7" d="M570 570.3L584.7 569.5L587.3 560.5L572.7 561.4Z"/><path fill="#eeeef7" d="M584.7 569.5L599.4 568.6L602 559.5L587.3 560.5Z"/><path fill="#ececf6" d="M599.4 568.6L614.1 567.5L616.6 558.4L602 559.5Z"/><path fill="#ebebf6" d="M614.1 567.5L628.9 566.2L631.4 557.1L616.6 558.4Z"/><path fill="#eaeaf5" d="M628.9 566.2L643.7 564.9L646.1 555.7L631.4 557.1Z"/><path fill="#e8e8f4" d="M643.7 564.9L658.5 563.3L660.9 554.2L646.1 555.7Z"/><path fill="#e6e6f3" d="M658.5 563.3L673.3 561.6L675.7 552.5L660.9 554.2Z"/><path fill="#e5e5f3" d="M673.3 561.6L688.2 559.8L690.5 550.7L675.7 552.5Z"/><path fill="#e3e3f2" d="M688.2 559.8L703.1 557.8L705.4 548.7L690.5 550.7Z"/></g>
<path class="mesh" d="M296.3 565.1L408.2 342.6M310.5 566.2L421.4 339M324.7 567.2L434.7 335.2M338.9 568.1L447.9 331.3M353.2 568.9L461.2 327.3M367.5 569.7L474.5 323.2M381.8 570.4L487.8 318.9M396.1 571L501.2 314.6M410.4 571.5L514.6 310.1M424.8 571.9L528 305.5M439.2 572.2L541.4 300.8M453.7 572.5L554.9 296.1M468.1 572.6L568.4 291.3M482.6 572.6L582 286.4M497.1 572.5L595.5 281.4M511.6 572.3L609.1 276.3M526.2 572L622.8 271.2M540.8 571.6L636.4 266.1M555.4 571L650.1 260.9M570 570.3L663.8 255.6M584.7 569.5L677.6 250.4M599.4 568.6L691.4 245.1M614.1 567.5L705.2 239.7M628.9 566.2L719 234.4M643.7 564.9L732.9 229M658.5 563.3L746.8 223.7M673.3 561.6L760.7 218.3M688.2 559.8L774.7 213M285.9 556.6L300 557.6L314.2 558.6L328.3 559.5L342.5 560.3L356.7 561.1L370.9 561.7L385.2 562.3L399.4 562.8L413.7 563.3L428 563.6L442.4 563.9L456.8 564L471.2 564.1L485.6 564L500 563.8L514.5 563.6L529 563.2L543.6 562.7L558.1 562.1L572.7 561.4L587.3 560.5L602 559.5L616.6 558.4L631.4 557.1L646.1 555.7L660.9 554.2L675.7 552.5L690.5 550.7L705.4 548.7M289.8 549.1L303.9 550L318 550.8L332.1 551.5L346.3 552.1L360.4 552.7L374.6 553.2L388.9 553.6L403.1 553.9L417.4 554.1L431.7 554.2L446 554.3L460.3 554.2L474.7 554.1L489.1 553.8L503.5 553.4L518 553L532.5 552.4L547 551.7L561.5 550.9L576.1 550L590.7 548.9L605.3 547.7L620 546.4L634.7 545L649.4 543.4L664.1 541.7L678.9 539.8L693.7 537.8L708.5 535.7M293.7 541.7L307.7 542.3L321.8 542.9L335.9 543.5L350 543.9L364.2 544.3L378.4 544.6L392.6 544.8L406.8 544.9L421 544.9L435.3 544.8L449.6 544.7L463.9 544.4L478.3 544.1L492.7 543.6L507.1 543.1L521.5 542.4L535.9 541.6L550.4 540.7L564.9 539.7L579.5 538.6L594.1 537.4L608.7 536L623.3 534.5L637.9 532.9L652.6 531.1L667.3 529.3L682.1 527.2L696.9 525.1L711.7 522.8M297.6 534.2L311.6 534.7L325.6 535.1L339.7 535.4L353.8 535.7L367.9 535.9L382.1 536L396.3 536L410.5 535.9L424.7 535.7L438.9 535.5L453.2 535.1L467.5 534.7L481.8 534.1L496.2 533.5L510.6 532.7L525 531.8L539.4 530.9L553.9 529.8L568.3 528.6L582.9 527.3L597.4 525.8L612 524.3L626.6 522.6L641.2 520.8L655.9 518.9L670.6 516.9L685.3 514.7L700.1 512.4L714.8 509.9M301.4 526.7L315.5 527L329.5 527.2L343.5 527.4L357.6 527.5L371.7 527.5L385.8 527.4L400 527.2L414.1 526.9L428.3 526.6L442.6 526.1L456.8 525.6L471.1 524.9L485.4 524.2L499.7 523.3L514.1 522.4L528.4 521.3L542.8 520.1L557.3 518.9L571.7 517.5L586.2 516L600.7 514.4L615.3 512.6L629.9 510.8L644.5 508.8L659.1 506.7L673.8 504.5L688.5 502.2L703.2 499.7L718 497.1M305.3 519.2L319.3 519.3L333.3 519.4L347.3 519.4L361.4 519.3L375.5 519.1L389.6 518.8L403.7 518.4L417.8 517.9L432 517.4L446.2 516.7L460.4 516L474.7 515.2L488.9 514.2L503.2 513.2L517.6 512L531.9 510.8L546.3 509.4L560.7 508L575.1 506.4L589.6 504.7L604.1 502.9L618.6 501L633.2 499L647.7 496.8L662.3 494.6L677 492.2L691.7 489.7L706.4 487.1L721.1 484.3M309.2 511.7L323.2 511.6L337.2 511.5L351.2 511.3L365.2 511L379.2 510.7L393.3 510.2L407.4 509.6L421.5 509L435.6 508.2L449.8 507.4L464 506.4L478.2 505.4L492.5 504.3L506.7 503L521 501.7L535.4 500.3L549.7 498.7L564.1 497.1L578.5 495.3L592.9 493.5L607.4 491.5L621.9 489.4L636.4 487.2L651 484.9L665.6 482.5L680.2 479.9L694.8 477.3L709.5 474.5L724.2 471.6M313.1 504.1L327.1 503.9L341 503.6L355 503.3L369 502.8L383 502.2L397 501.6L411.1 500.8L425.2 500L439.3 499.1L453.4 498L467.6 496.9L481.8 495.7L496 494.4L510.3 492.9L524.5 491.4L538.8 489.8L553.1 488L567.5 486.2L581.9 484.3L596.3 482.2L610.7 480.1L625.2 477.8L639.7 475.5L654.2 473L668.8 470.4L683.4 467.7L698 464.9L712.6 462L727.3 458.9M317 496.6L330.9 496.2L344.9 495.8L358.8 495.2L372.8 494.6L386.8 493.8L400.8 493L414.8 492.1L428.9 491L442.9 489.9L457.1 488.7L471.2 487.4L485.4 486L499.5 484.4L513.8 482.8L528 481.1L542.3 479.3L556.6 477.4L570.9 475.4L585.2 473.3L599.6 471L614 468.7L628.5 466.3L642.9 463.7L657.4 461.1L672 458.4L686.5 455.5L701.1 452.6L715.7 449.5L730.4 446.3M321 489L334.8 488.5L348.7 487.9L362.6 487.1L376.6 486.3L390.5 485.4L404.5 484.4L418.5 483.3L432.5 482.1L446.6 480.8L460.7 479.4L474.8 477.9L488.9 476.3L503.1 474.6L517.3 472.8L531.5 470.9L545.7 468.9L560 466.8L574.3 464.6L588.6 462.3L602.9 459.9L617.3 457.4L631.7 454.8L646.2 452.1L660.6 449.3L675.1 446.4L689.7 443.4L704.2 440.3L718.8 437.1L733.4 433.8M324.9 481.5L338.7 480.8L352.6 480L366.4 479.1L380.3 478.1L394.3 477L408.2 475.8L422.2 474.5L436.2 473.1L450.2 471.6L464.3 470L478.4 468.3L492.5 466.6L506.6 464.7L520.8 462.7L534.9 460.6L549.1 458.4L563.4 456.2L577.7 453.8L591.9 451.3L606.3 448.7L620.6 446.1L635 443.3L649.4 440.4L663.8 437.5L678.3 434.4L692.8 431.3L707.3 428L721.9 424.7L736.5 421.3M328.8 473.9L342.6 473.1L356.4 472.1L370.3 471L384.1 469.8L398 468.6L412 467.2L425.9 465.7L439.9 464.1L453.9 462.5L467.9 460.7L481.9 458.8L496 456.9L510.1 454.8L524.2 452.6L538.4 450.4L552.6 448L566.8 445.6L581 443L595.3 440.4L609.6 437.6L623.9 434.8L638.3 431.9L652.6 428.8L667 425.7L681.5 422.5L696 419.2L710.5 415.8L725 412.4L739.5 408.8M332.7 466.4L346.5 465.3L360.3 464.2L374.1 462.9L387.9 461.6L401.8 460.1L415.7 458.6L429.6 456.9L443.6 455.2L457.5 453.3L471.5 451.4L485.5 449.3L499.6 447.2L513.6 444.9L527.7 442.6L541.9 440.2L556 437.6L570.2 435L584.4 432.3L598.6 429.5L612.9 426.5L627.2 423.5L641.5 420.5L655.8 417.3L670.2 414L684.6 410.7L699.1 407.2L713.5 403.7L728 400.1L742.6 396.4M336.6 458.8L350.4 457.6L364.1 456.3L377.9 454.9L391.7 453.3L405.6 451.7L419.4 450L433.3 448.2L447.2 446.2L461.2 444.2L475.1 442.1L489.1 439.8L503.1 437.5L517.1 435.1L531.2 432.6L545.3 430L559.4 427.2L573.6 424.4L587.7 421.5L601.9 418.6L616.2 415.5L630.4 412.3L644.7 409.1L659 405.7L673.4 402.3L687.8 398.8L702.2 395.3L716.6 391.6L731.1 387.9L745.6 384M340.6 451.2L354.3 449.8L368 448.4L381.8 446.8L395.5 445.1L409.3 443.3L423.2 441.4L437 439.4L450.9 437.3L464.8 435.1L478.7 432.8L492.7 430.4L506.6 427.9L520.6 425.3L534.7 422.6L548.7 419.8L562.8 416.9L576.9 413.9L591.1 410.9L605.3 407.7L619.5 404.5L633.7 401.1L648 397.7L662.2 394.3L676.6 390.7L690.9 387L705.3 383.3L719.7 379.5L734.1 375.7L748.6 371.7M344.5 443.6L358.2 442.1L371.9 440.5L385.6 438.7L399.3 436.9L413.1 434.9L426.9 432.8L440.7 430.6L454.6 428.4L468.4 426L482.3 423.5L496.2 420.9L510.2 418.2L524.2 415.4L538.2 412.6L552.2 409.6L566.2 406.6L580.3 403.4L594.4 400.2L608.6 396.9L622.7 393.5L636.9 390L651.2 386.4L665.4 382.8L679.7 379.1L694 375.3L708.4 371.4L722.8 367.5L737.2 363.5L751.6 359.5M348.4 436L362.1 434.3L375.7 432.5L389.4 430.6L403.1 428.6L416.9 426.5L430.6 424.2L444.4 421.9L458.2 419.4L472 416.9L485.9 414.2L499.8 411.4L513.7 408.6L527.6 405.6L541.6 402.6L555.6 399.5L569.6 396.2L583.7 392.9L597.8 389.5L611.9 386.1L626 382.5L640.2 378.9L654.4 375.2L668.6 371.4L682.9 367.5L697.1 363.6L711.5 359.6L725.8 355.5L740.2 351.4L754.6 347.3M352.4 428.4L366 426.6L379.6 424.6L393.3 422.5L406.9 420.4L420.6 418L434.4 415.6L448.1 413.1L461.9 410.5L475.7 407.8L489.5 404.9L503.4 402L517.2 399L531.1 395.8L545.1 392.6L559 389.3L573 385.9L587 382.5L601.1 378.9L615.2 375.3L629.3 371.6L643.4 367.8L657.6 363.9L671.8 360L686 356L700.2 351.9L714.5 347.8L728.8 343.6L743.2 339.4L757.6 335.1M356.3 420.8L369.9 418.8L383.5 416.7L397.1 414.5L410.7 412.1L424.4 409.6L438.1 407L451.8 404.4L465.5 401.6L479.3 398.7L493.1 395.7L506.9 392.6L520.8 389.4L534.6 386.1L548.5 382.7L562.5 379.2L576.4 375.7L590.4 372L604.4 368.3L618.5 364.5L632.5 360.6L646.6 356.7L660.8 352.7L674.9 348.6L689.1 344.5L703.3 340.3L717.6 336L731.9 331.7L746.2 327.4L760.5 323M360.3 413.2L373.8 411.1L387.3 408.8L400.9 406.4L414.5 403.9L428.2 401.2L441.8 398.5L455.5 395.6L469.2 392.6L482.9 389.6L496.7 386.4L510.5 383.1L524.3 379.8L538.1 376.3L552 372.8L565.9 369.1L579.8 365.4L593.7 361.6L607.7 357.7L621.7 353.8L635.8 349.8L649.8 345.7L663.9 341.5L678.1 337.3L692.2 333L706.4 328.7L720.6 324.3L734.9 319.9L749.2 315.4L763.5 310.9M364.2 405.6L377.7 403.3L391.2 400.9L404.8 398.3L418.3 395.6L431.9 392.8L445.5 389.9L459.2 386.9L472.8 383.7L486.5 380.5L500.3 377.2L514 373.7L527.8 370.2L541.6 366.6L555.4 362.8L569.3 359L583.2 355.2L597.1 351.2L611 347.2L625 343.1L639 338.9L653 334.7L667.1 330.4L681.2 326L695.3 321.6L709.5 317.1L723.7 312.6L737.9 308.1L752.1 303.5L766.4 298.9M368.2 398L381.6 395.5L395.1 392.9L408.6 390.2L422.1 387.4L435.7 384.4L449.3 381.3L462.9 378.1L476.5 374.8L490.1 371.4L503.8 367.9L517.5 364.3L531.3 360.6L545.1 356.8L558.9 352.9L572.7 349L586.5 344.9L600.4 340.8L614.3 336.6L628.3 332.4L642.2 328.1L656.2 323.7L670.3 319.2L684.3 314.8L698.4 310.2L712.5 305.6L726.7 301L740.9 296.4L755.1 291.7L769.3 286.9M372.1 390.4L385.5 387.8L399 385L412.4 382.1L425.9 379.1L439.4 376L453 372.7L466.5 369.4L480.1 365.9L493.8 362.4L507.4 358.7L521.1 354.9L534.8 351.1L548.5 347.1L562.3 343.1L576.1 338.9L589.9 334.7L603.7 330.5L617.6 326.1L631.5 321.7L645.5 317.3L659.4 312.7L673.4 308.2L687.4 303.5L701.5 298.9L715.6 294.2L729.7 289.4L743.9 284.6L758 279.8L772.2 275M376.1 382.8L389.4 380L402.8 377.1L416.3 374L429.7 370.9L443.2 367.6L456.7 364.2L470.2 360.7L483.8 357L497.4 353.3L511 349.5L524.6 345.5L538.3 341.5L552 337.4L565.7 333.2L579.5 328.9L593.2 324.6L607.1 320.1L620.9 315.6L634.8 311.1L648.7 306.5L662.6 301.8L676.6 297.1L690.5 292.3L704.6 287.6L718.6 282.7L732.7 277.9L746.8 273L761 268.1L775.1 263.2M380 375.1L393.3 372.2L406.7 369.1L420.1 366L433.5 362.6L446.9 359.2L460.4 355.6L473.9 351.9L487.4 348.2L501 344.3L514.5 340.3L528.1 336.2L541.8 332L555.4 327.7L569.1 323.3L582.8 318.9L596.6 314.4L610.4 309.8L624.2 305.2L638 300.5L651.9 295.7L665.8 290.9L679.7 286.1L693.6 281.2L707.6 276.3L721.7 271.3L735.7 266.3L749.8 261.4L763.9 256.3L778 251.3M384 367.5L397.3 364.4L410.6 361.2L423.9 357.9L437.3 354.4L450.7 350.8L464.1 347.1L477.6 343.2L491.1 339.3L504.6 335.2L518.1 331.1L531.7 326.8L545.3 322.5L558.9 318L572.5 313.5L586.2 308.9L599.9 304.3L613.7 299.5L627.4 294.8L641.2 289.9L655.1 285L668.9 280.1L682.8 275.1L696.7 270.1L710.7 265L724.7 260L738.7 254.9L752.7 249.8L766.8 244.7L780.9 239.5M387.9 359.9L401.2 356.7L414.4 353.3L427.8 349.8L441.1 346.2L454.5 342.4L467.8 338.5L481.3 334.5L494.7 330.4L508.2 326.2L521.7 321.9L535.2 317.5L548.7 313L562.3 308.4L575.9 303.7L589.6 299L603.3 294.2L617 289.3L630.7 284.3L644.5 279.4L658.3 274.3L672.1 269.2L685.9 264.1L699.8 259L713.7 253.8L727.7 248.6L741.7 243.4L755.7 238.2L769.7 233L783.8 227.8M391.9 352.3L405.1 348.9L418.3 345.4L431.6 341.7L444.9 337.9L458.2 334L471.5 330L484.9 325.8L498.3 321.5L511.8 317.2L525.2 312.7L538.7 308.1L552.2 303.5L565.8 298.7L579.3 293.9L592.9 289L606.6 284.1L620.3 279L633.9 274L647.7 268.8L661.4 263.7L675.2 258.5L689 253.2L702.9 247.9L716.8 242.7L730.7 237.4L744.6 232L758.6 226.7L772.6 221.4L786.6 216.1"/>
<path class="edge" d="M282.1 564L296.3 565.1L310.5 566.2L324.7 567.2L338.9 568.1L353.2 568.9L367.5 569.7L381.8 570.4L396.1 571L410.4 571.5L424.8 571.9L439.2 572.2L453.7 572.5L468.1 572.6L482.6 572.6L497.1 572.5L511.6 572.3L526.2 572L540.8 571.6L555.4 571L570 570.3L584.7 569.5L599.4 568.6L614.1 567.5L628.9 566.2L643.7 564.9L658.5 563.3L673.3 561.6L688.2 559.8L703.1 557.8L788.7 207.7L774.7 213L760.7 218.3L746.8 223.7L732.9 229L719 234.4L705.2 239.7L691.4 245.1L677.6 250.4L663.8 255.6L650.1 260.9L636.4 266.1L622.8 271.2L609.1 276.3L595.5 281.4L582 286.4L568.4 291.3L554.9 296.1L541.4 300.8L528 305.5L514.6 310.1L501.2 314.6L487.8 318.9L474.5 323.2L461.2 327.3L447.9 331.3L434.7 335.2L421.4 339L408.2 342.6L395.1 346.1Z"/>
<path class="ax" stroke-width="2" d="M277.8 260.6L282.2 571.1"/><path class="ax" stroke-width="1.700" d="M281.2 570.1L702.7 604.9"/><path class="ax" stroke-width="2.100" d="M702.7 604.9L784.6 494.9"/>
<line class="tk" x1="277.6" y1="524.5" x2="280.6" y2="524.5"/><line class="tk" x1="276.8" y1="471.5" x2="279.8" y2="471.5"/><line class="tk" x1="276.1" y1="418.5" x2="279.1" y2="418.5"/><line class="tk" x1="275.3" y1="367.5" x2="278.3" y2="367.5"/><line class="tk" x1="274.6" y1="314.5" x2="277.6" y2="314.5"/><line class="tk" x1="273.8" y1="261.5" x2="276.8" y2="261.5"/><line class="tk2" x1="279.1" y1="564.5" x2="281.1" y2="564.5"/><line class="tk2" x1="278.9" y1="551.5" x2="280.9" y2="551.5"/><line class="tk2" x1="278.7" y1="538.5" x2="280.7" y2="538.5"/><line class="tk2" x1="278.4" y1="512.5" x2="280.4" y2="512.5"/><line class="tk2" x1="278.2" y1="499.5" x2="280.2" y2="499.5"/><line class="tk2" x1="278" y1="486.5" x2="280" y2="486.5"/><line class="tk2" x1="277.6" y1="459.5" x2="279.6" y2="459.5"/><line class="tk2" x1="277.5" y1="446.5" x2="279.5" y2="446.5"/><line class="tk2" x1="277.3" y1="433.5" x2="279.3" y2="433.5"/><line class="tk2" x1="276.9" y1="407.5" x2="278.9" y2="407.5"/><line class="tk2" x1="276.7" y1="394.5" x2="278.7" y2="394.5"/><line class="tk2" x1="276.5" y1="380.5" x2="278.5" y2="380.5"/><line class="tk2" x1="276.1" y1="354.5" x2="278.1" y2="354.5"/><line class="tk2" x1="276" y1="341.5" x2="278" y2="341.5"/><line class="tk2" x1="275.8" y1="327.5" x2="277.8" y2="327.5"/><line class="tk2" x1="275.4" y1="301.5" x2="277.4" y2="301.5"/><line class="tk2" x1="275.2" y1="287.5" x2="277.2" y2="287.5"/><line class="tk2" x1="275" y1="274.5" x2="277" y2="274.5"/><line class="tk" x1="282.2" y1="571.1" x2="281.4" y2="574.1"/><line class="tk" x1="323.3" y1="574.5" x2="322.5" y2="577.5"/><line class="tk" x1="364.7" y1="577.9" x2="363.9" y2="580.9"/><line class="tk" x1="406.2" y1="581.4" x2="405.4" y2="584.4"/><line class="tk" x1="447.9" y1="584.8" x2="447.1" y2="587.8"/><line class="tk" x1="489.9" y1="588.3" x2="489.1" y2="591.3"/><line class="tk" x1="532" y1="591.8" x2="531.2" y2="594.8"/><line class="tk" x1="574.4" y1="595.3" x2="573.6" y2="598.3"/><line class="tk" x1="616.9" y1="598.8" x2="616.1" y2="601.8"/><line class="tk" x1="659.7" y1="602.4" x2="658.9" y2="605.4"/><line class="tk" x1="702.7" y1="605.9" x2="701.9" y2="608.9"/><line class="tk" x1="703.7" y1="604.9" x2="706.7" y2="605.4"/><line class="tk" x1="710.8" y1="595.4" x2="713.8" y2="595.9"/><line class="tk" x1="717.8" y1="586" x2="720.8" y2="586.5"/><line class="tk" x1="724.6" y1="576.8" x2="727.6" y2="577.3"/><line class="tk" x1="731.4" y1="567.6" x2="734.4" y2="568.1"/><line class="tk" x1="738.1" y1="558.6" x2="741.1" y2="559.1"/><line class="tk" x1="744.8" y1="549.7" x2="747.8" y2="550.2"/><line class="tk" x1="751.3" y1="541" x2="754.3" y2="541.5"/><line class="tk" x1="757.7" y1="532.3" x2="760.7" y2="532.8"/><line class="tk" x1="764.1" y1="523.8" x2="767.1" y2="524.3"/><line class="tk" x1="770.3" y1="515.4" x2="773.3" y2="515.9"/><line class="tk" x1="776.5" y1="507.1" x2="779.5" y2="507.6"/><line class="tk" x1="782.6" y1="498.9" x2="785.6" y2="499.4"/>
<text class="zl" x="275.8" y="527.5">40000</text><text class="zl" x="275" y="474.5">60000</text><text class="zl" x="274.3" y="421.5">80000</text><text class="zl" x="273.5" y="370.5">100000</text><text class="zl" x="272.8" y="317.5">120000</text><text class="zl" x="272" y="264.5">140000</text><text class="xl" x="281.7" y="583.1">1.5</text><text class="xl" x="322.8" y="586.5">1.6</text><text class="xl" x="364.2" y="589.9">1.7</text><text class="xl" x="405.7" y="593.4">1.8</text><text class="xl" x="447.4" y="596.8">1.9</text><text class="xl" x="489.4" y="600.3">2</text><text class="xl" x="531.5" y="603.8">2.1</text><text class="xl" x="573.9" y="607.3">2.2</text><text class="xl" x="616.4" y="610.8">2.3</text><text class="xl" x="659.2" y="614.4">2.4</text><text class="xl" x="702.2" y="617.9">2.5</text><text class="yl" x="707.2" y="612.9">0.2</text><text class="yl" x="714.3" y="603.4">0.22</text><text class="yl" x="721.3" y="594">0.24</text><text class="yl" x="728.1" y="584.8">0.26</text><text class="yl" x="734.9" y="575.6">0.28</text><text class="yl" x="741.6" y="566.6">0.3</text><text class="yl" x="748.3" y="557.7">0.32</text><text class="yl" x="754.8" y="549">0.34</text><text class="yl" x="761.2" y="540.3">0.36</text><text class="yl" x="767.6" y="531.8">0.38</text><text class="yl" x="773.8" y="523.4">0.4</text><text class="yl" x="780" y="515.1">0.42</text><text class="yl" x="786.1" y="506.9">0.44</text>
<text class="al" x="469.500" y="611" letter-spacing=".3">width</text><text class="al" x="775.500" y="558">thickness</text><text transform="translate(251.300 422.600) rotate(-90)" font-size="11" fill="#000">life</text>
</svg></div>
<div id="status"><span>For Help, press F1</span><div class="sdiv" style="left:549px"></div><div class="sdiv" style="left:715px"></div>
<svg style="left:888px;top:7px" width="12" height="12"><rect x="9" y="1" width="2" height="2" fill="#fff"/><rect x="9" y="1" width="1" height="1" fill="#b8b0b0"/><rect x="5" y="5" width="2" height="2" fill="#fff"/><rect x="5" y="5" width="1" height="1" fill="#b8b0b0"/><rect x="9" y="5" width="2" height="2" fill="#fff"/><rect x="9" y="5" width="1" height="1" fill="#b8b0b0"/><rect x="1" y="9" width="2" height="2" fill="#fff"/><rect x="1" y="9" width="1" height="1" fill="#b8b0b0"/><rect x="5" y="9" width="2" height="2" fill="#fff"/><rect x="5" y="9" width="1" height="1" fill="#b8b0b0"/><rect x="9" y="9" width="2" height="2" fill="#fff"/><rect x="9" y="9" width="1" height="1" fill="#b8b0b0"/></svg></div>
</div></div></body></html>
